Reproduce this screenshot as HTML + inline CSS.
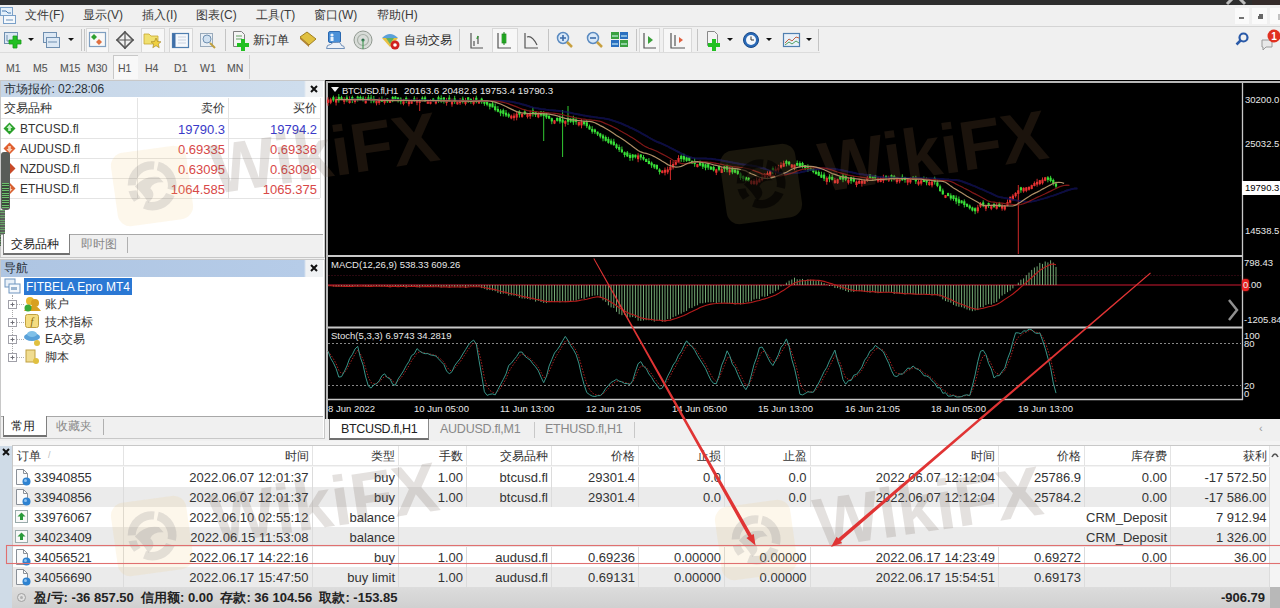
<!DOCTYPE html>
<html><head><meta charset="utf-8">
<style>
*{margin:0;padding:0;box-sizing:border-box}
html,body{width:1280px;height:608px;overflow:hidden;background:#f0f0f0;font-family:"Liberation Sans",sans-serif;color:#222}
#root{position:absolute;left:0;top:0;width:1280px;height:608px;overflow:hidden}
.a{position:absolute}
.t{position:absolute;white-space:nowrap;line-height:1}
.menu .t{font-size:12px;color:#3a3a3a;top:9px}
.tf .t{font-size:10.5px;color:#555;top:63px;-webkit-text-stroke:0.1px #555}
.hdr{background:linear-gradient(90deg,#c6d6e8 0,#cedded 303px,#f0f2f4 305px)}
.hdr2{background:linear-gradient(90deg,#aec5e2 0,#b6cce8 303px,#f0f2f4 305px)}
.mw .t{font-size:12px}
.mw .p{font-size:13px}
.rt{text-align:right}
.sep{position:absolute;width:1px;background:#c8c8c8}
.tb .t{font-size:12px;color:#2a2a2a;top:34px}
.ch .t{color:#e8e8e8;font-size:9.5px}
.term .t{font-size:13px;color:#333}
</style></head><body><div id="root">

<!-- top dark bar -->
<div class="a" style="left:0;top:0;width:1280px;height:5px;background:#2e2e2e"></div>

<!-- menubar -->
<div class="a menu" style="left:0;top:5px;width:1280px;height:21px;background:#f0f0f0">
</div>
<div class="menu">
  <svg class="a" style="left:0;top:6px" width="17" height="18" viewBox="0 0 17 18"><rect x="0.5" y="1.5" width="12" height="8" fill="#e4f0fa" stroke="#7aa0c8"/><path d="M2 5h4l2 2h3" stroke="#4a7ab0" fill="none"/><rect x="3.5" y="9.5" width="12" height="8" fill="#f4f8fc" stroke="#7aa0c8"/><path d="M6 14h7" stroke="#6a90b8"/></svg>
  <div class="t" style="left:25px">文件(F)</div>
  <div class="t" style="left:83px">显示(V)</div>
  <div class="t" style="left:142px">插入(I)</div>
  <div class="t" style="left:196px">图表(C)</div>
  <div class="t" style="left:256px">工具(T)</div>
  <div class="t" style="left:314px">窗口(W)</div>
  <div class="t" style="left:377px">帮助(H)</div>
</div>
<div class="a" style="left:0;top:26px;width:1280px;height:1px;background:#d4d4d4"></div>

<!-- toolbar -->
<div class="tb">
  <div class="t" style="left:253px">新订单</div>
  <div class="t" style="left:404px">自动交易</div>
</div>


<!-- toolbar icons -->
<svg class="a" style="left:0;top:0" width="830" height="56" viewBox="0 0 830 56">
 <g fill="none" stroke="#c4c4c4">
  <path d="M81.5 29v22M84.5 29v22M225.5 29v22M459.5 29v22M548.5 29v22M636.5 29v22M697.5 29v22M818.5 29v22"/>
 </g>
 <g fill="#f7f7f7" stroke="#d8d8d8">
  <rect x="86.5" y="28.5" width="22" height="24"/><rect x="141.5" y="28.5" width="23" height="24"/><rect x="169.5" y="28.5" width="23" height="24"/>
  <rect x="492.5" y="28.5" width="25" height="24"/><rect x="639.5" y="28.5" width="20" height="24"/><rect x="663.5" y="28.5" width="28" height="24"/>
 </g>
 <!-- new chart -->
 <rect x="4.5" y="32.5" width="13" height="11" fill="#dce8f4" stroke="#6f8fb0"/>
 <path d="M7 35v6h8" stroke="#6f8fb0" fill="none"/>
 <path d="M13 36h4v4h4v4h-4v4h-4v-4h-4v-4h4z" fill="#22c022" stroke="#1a9a1a" stroke-width="0.8"/>
 <path d="M28 38h6l-3 3z" fill="#111"/>
 <!-- profiles -->
 <rect x="43.5" y="32.5" width="13" height="10" fill="#dce8f4" stroke="#6f8fb0"/>
 <rect x="46.5" y="37.5" width="13" height="10" fill="#dce8f4" stroke="#6f8fb0"/>
 <path d="M48 42h9" stroke="#6f8fb0"/>
 <path d="M68 38h6l-3 3z" fill="#111"/>
 <!-- market watch -->
 <rect x="89.5" y="32.5" width="16" height="14" fill="#f8f8f8" stroke="#7f9fc0" stroke-width="1.2"/>
 <path d="M94 34l3 3-3 3-3-3z" fill="#30a030"/><path d="M99 39l3 3-3 3-3-3z" fill="#e07040"/>
 <!-- crosshair -->
 <path d="M125 32l8 8-8 8-8-8z" fill="none" stroke="#555" stroke-width="1.6"/>
 <path d="M125 31v18M116 40h18" stroke="#555" stroke-width="1.2"/>
 <!-- navigator folder star -->
 <path d="M144 34h5l2 2h7v8h-14z" fill="#f0e070" stroke="#c8a830" stroke-width="0.8"/>
 <path d="M156 38l1.5 3.5 3.5 0.3-2.7 2.3 0.9 3.6-3.2-2-3.2 2 0.9-3.6-2.7-2.3 3.5-0.3z" fill="#f0d040" stroke="#a08020" stroke-width="0.6"/>
 <!-- terminal -->
 <rect x="172.5" y="33.5" width="16" height="14" fill="#f4f8fc" stroke="#4f7fb0" stroke-width="1.2"/>
 <rect x="172.5" y="33.5" width="3" height="14" fill="#3f6fa8"/>
 <path d="M178 37h8M178 40h8M178 43h8" stroke="#c0c8d8" stroke-width="0.8"/>
 <!-- tester -->
 <rect x="200.5" y="33.5" width="12" height="13" fill="#e8eef4" stroke="#9ab"/>
 <circle cx="207" cy="39" r="4" fill="#cfe0f0" stroke="#7090b0"/>
 <path d="M210 43l5 5" stroke="#c0a040" stroke-width="2"/>
 <!-- new order -->
 <path d="M233.5 31.5h8l3 3v12h-11z" fill="#f4f4f4" stroke="#808080"/>
 <path d="M236 36h6M236 39h6" stroke="#60a060"/>
 <path d="M241 39h4v4h4v4h-4v4h-4v-4h-4v-4h4z" fill="#22c022"/>
 <!-- metaeditor gold -->
 <path d="M300 37l7-5 9 7-7 6z" fill="#e0c040" stroke="#a08020"/>
 <path d="M300 37l9 8 0 2-9-8z" fill="#b08030"/>
 <!-- person cloud -->
 <rect x="328.5" y="31.5" width="12" height="11" rx="1.5" fill="#4a90d8" stroke="#2a68b0"/>
 <circle cx="332" cy="35" r="1.6" fill="#e8f2fc"/><rect x="330.5" y="37" width="3" height="4" fill="#e8f2fc"/>
 <path d="M326.5 48.5 q0-4 4-4 q2-3 6-2 q4-1 5 3 q3 0 3 3 z" fill="#eef2f8" stroke="#6f8fb8"/>
 <!-- signals -->
 <circle cx="363" cy="40" r="9" fill="#d8dcd8" stroke="#909890"/>
 <circle cx="363" cy="40" r="5.5" fill="none" stroke="#a8b0a8" stroke-width="1.2"/>
 <circle cx="363" cy="40" r="1.6" fill="#2a6a4a"/>
 <path d="M363 40v9" stroke="#4a9a5a" stroke-width="1.2"/>
 <!-- auto trading -->
 <path d="M382 38q8-8 16 0z" fill="#5aa0d8"/>
 <path d="M382 38l8 9 8-9z" fill="#e8c040"/>
 <path d="M386 38l4 6 4-6z" fill="#60b060"/>
 <circle cx="395" cy="45" r="4.5" fill="#d02020"/><circle cx="395" cy="45" r="1.8" fill="#fff"/>
 <!-- chart types -->
 <g stroke="#555" stroke-width="1.2" fill="none"><path d="M471 33v15h12M474 46v-5M478 44v-8"/></g>
 <path d="M478 36l-1 3" stroke="#3a9a3a" stroke-width="1.4"/>
 <g stroke="#555" stroke-width="1.2" fill="none"><path d="M498 33v15h13"/></g>
 <rect x="502" y="34" width="4" height="9" fill="#28c028" stroke="#1a801a" stroke-width="0.7"/><path d="M504 32v13" stroke="#1a801a"/>
 <g stroke="#555" stroke-width="1.2" fill="none"><path d="M525 33v15h13"/><path d="M527 37q5-2 10 8"/></g>
 <!-- zoom in/out -->
 <circle cx="563" cy="38" r="5.5" fill="#d8e8f8" stroke="#5a8ac0" stroke-width="1.5"/>
 <path d="M560 38h6M563 35v6" stroke="#3a6aa8" stroke-width="1.6"/>
 <path d="M567 42l5 5" stroke="#c8a040" stroke-width="2.5"/>
 <circle cx="593" cy="38" r="5.5" fill="#d8e8f8" stroke="#5a8ac0" stroke-width="1.5"/>
 <path d="M590 38h6" stroke="#3a6aa8" stroke-width="1.6"/>
 <path d="M597 42l5 5" stroke="#c8a040" stroke-width="2.5"/>
 <!-- tile -->
 <rect x="611" y="32" width="8" height="7" fill="#3aa040"/><rect x="620" y="32" width="8" height="7" fill="#2a70c0"/>
 <rect x="611" y="40" width="8" height="7" fill="#2a70c0"/><rect x="620" y="40" width="8" height="7" fill="#3aa040"/>
 <path d="M612 36h6M621 36h6M612 44h6M621 44h6" stroke="#dff" stroke-width="1.2"/>
 <!-- autoscroll / shift -->
 <g stroke="#555" stroke-width="1.2" fill="none"><path d="M644 33v15h12M671 33v15h14M675 35v11"/></g>
 <path d="M648 36l5 4-5 4z" fill="#3aa03a"/>
 <path d="M679 37l4 3-4 3z" fill="#e06040"/>
 <!-- indicators -->
 <path d="M707.5 31.5h7l3 3v11h-10z" fill="#f4f4f4" stroke="#888"/>
 <path d="M712 39h4v4h4v4h-4v4h-4v-4h-4v-4h4z" fill="#22c022"/>
 <path d="M727 38h6l-3 3z" fill="#111"/>
 <!-- clock -->
 <circle cx="751" cy="40" r="7.5" fill="#2a6ab8" stroke="#1a4a88"/>
 <circle cx="751" cy="40" r="5" fill="#f4f8fc"/>
 <path d="M751 36.5v3.5h3" stroke="#333" fill="none"/>
 <path d="M766 38h6l-3 3z" fill="#111"/>
 <!-- templates -->
 <rect x="783.5" y="33.5" width="16" height="13" fill="#e8f0f8" stroke="#4f7fb0" stroke-width="1.2"/>
 <path d="M785 43l4-4 3 2 4-4 3 1" stroke="#c06040" fill="none"/><path d="M785 45l4-3 3 2 4-3 3 2" stroke="#50a060" fill="none"/>
 <path d="M806 38h6l-3 3z" fill="#111"/>
</svg>
<!-- right-side icons -->
<svg class="a" style="left:1200px;top:0" width="80" height="56" viewBox="0 0 80 56">
 <path d="M27 4l6-6M39 -2l6 6" stroke="#bdbdbd" stroke-width="3"/><rect x="52" y="0" width="28" height="5" fill="#3a2a28" opacity="0.6"/>
 <rect x="35" y="8" width="14" height="16" fill="#fafafa"/><rect x="52" y="8" width="15" height="16" fill="#fafafa"/><rect x="70" y="8" width="10" height="16" fill="#fafafa"/>
 <path d="M39 18h5" stroke="#444" stroke-width="1.5"/>
 <path d="M59 14h4v5h-4zM58 16h3v3h-3z" fill="#666"/>
 <path d="M79 14v6" stroke="#888"/>
 <circle cx="43.5" cy="37.5" r="4" fill="none" stroke="#2a5aa8" stroke-width="2.2"/>
 <path d="M40.5 40.5l-4 4" stroke="#2a5aa8" stroke-width="2.5"/>
 <path d="M62 40h10v7h-6l-3 3v-3h-1z" fill="#e8e8e8" stroke="#9a9a9a"/>
 <circle cx="74" cy="36" r="6.5" fill="#e03020"/>
 <text x="74" y="40" font-size="10" font-weight="bold" fill="#fff" text-anchor="middle" font-family="Liberation Sans">1</text>
</svg>

<!-- timeframe bar -->
<div class="tf">
  <div class="t" style="left:6px">M1</div>
  <div class="t" style="left:33px">M5</div>
  <div class="t" style="left:60px">M15</div>
  <div class="t" style="left:87px">M30</div>
  <div class="a" style="left:113px;top:55px;width:25px;height:24px;background:#f8f8f8;border-left:1px solid #c8c8c8;border-top:1px solid #c8c8c8"></div>
  <div class="t" style="left:118px">H1</div>
  <div class="t" style="left:145px">H4</div>
  <div class="t" style="left:174px">D1</div>
  <div class="t" style="left:200px">W1</div>
  <div class="t" style="left:227px">MN</div>
  <div class="a" style="left:249px;top:55px;width:1px;height:24px;background:#d0d0d0"></div>
  <div class="a" style="left:0;top:52px;width:820px;height:1px;background:#dcdcdc"></div>
</div>

<!-- market watch -->
<div class="a" style="left:0;top:80px;width:325px;height:178px;background:#fff;border:1px solid #c8c8c8"></div>
<div class="a hdr" style="left:1px;top:81px;width:322px;height:16px"></div>
<div class="t" style="left:4px;top:83px;font-size:12px;color:#2a323a;letter-spacing:-0.1px">市场报价: 02:28:06</div>
<svg class="a" style="left:309px;top:84px" width="10" height="10" viewBox="0 0 10 10"><path d="M2 2L8 8M8 2L2 8" stroke="#111" stroke-width="2"/></svg>


<!-- market watch content -->
<div class="mw">
<div class="t" style="left:4px;top:102px;color:#333">交易品种</div>
<div class="t rt" style="left:150px;width:75px;top:102px;color:#333">卖价</div>
<div class="t rt" style="left:240px;width:77px;top:102px;color:#333">买价</div>
<div class="a" style="left:1px;top:118px;width:319px;height:1px;background:#e4e4e4"></div>
<div class="a" style="left:1px;top:138px;width:319px;height:1px;background:#e4e4e4"></div>
<div class="a" style="left:1px;top:158px;width:319px;height:1px;background:#e4e4e4"></div>
<div class="a" style="left:1px;top:178px;width:319px;height:1px;background:#e4e4e4"></div>
<div class="a" style="left:1px;top:198px;width:319px;height:1px;background:#e4e4e4"></div>
<div class="a" style="left:137px;top:98px;width:1px;height:100px;background:#e4e4e4"></div>
<div class="a" style="left:228px;top:98px;width:1px;height:100px;background:#e4e4e4"></div>
<div class="a" style="left:320px;top:98px;width:1px;height:100px;background:#e4e4e4"></div>
<div class="t" style="left:20px;top:123px;color:#333">BTCUSD.fl</div>
<div class="t" style="left:20px;top:143px;color:#333">AUDUSD.fl</div>
<div class="t" style="left:20px;top:163px;color:#333">NZDUSD.fl</div>
<div class="t" style="left:20px;top:183px;color:#333">ETHUSD.fl</div>
<div class="t rt p" style="left:125px;width:100px;top:123px;color:#3a3ac8">19790.3</div>
<div class="t rt p" style="left:217px;width:100px;top:123px;color:#3a3ac8">19794.2</div>
<div class="t rt p" style="left:125px;width:100px;top:143px;color:#d84848">0.69335</div>
<div class="t rt p" style="left:217px;width:100px;top:143px;color:#d84848">0.69336</div>
<div class="t rt p" style="left:125px;width:100px;top:163px;color:#d84848">0.63095</div>
<div class="t rt p" style="left:217px;width:100px;top:163px;color:#d84848">0.63098</div>
<div class="t rt p" style="left:125px;width:100px;top:183px;color:#d84848">1064.585</div>
<div class="t rt p" style="left:217px;width:100px;top:183px;color:#d84848">1065.375</div>
<svg class="a" style="left:3px;top:122px" width="14" height="76" viewBox="0 0 14 76">
 <path d="M6.5 0.5 L12.5 6.5 L6.5 12.5 L0.5 6.5 Z" fill="#2aa02a"/><path d="M6.5 2.5 L9.5 6 H7.8 V9 H5.2 V6 H3.5 Z" fill="#c8f0c8"/>
 <path d="M6.5 20.5 L12.5 26.5 L6.5 32.5 L0.5 26.5 Z" fill="#e06030"/><path d="M6.5 30.5 L9.5 27 H7.8 V24 H5.2 V27 H3.5 Z" fill="#f8d0b8"/>
 <path d="M6.5 40.5 L12.5 46.5 L6.5 52.5 L0.5 46.5 Z" fill="#c84a28"/>
 <path d="M6.5 60.5 L12.5 66.5 L6.5 72.5 L0.5 66.5 Z" fill="#d86030"/><path d="M6.5 70.5 L9.5 67 H7.8 V64 H5.2 V67 H3.5 Z" fill="#f8d0b8"/>
</svg>
<div class="a" style="left:1px;top:152px;width:9px;height:58px;background:#585c58;border-radius:3px"></div>
<div class="a" style="left:2px;top:183px;width:7px;height:25px;background:repeating-linear-gradient(#6cc06c 0 1px,#3a4a3a 1px 2.4px)"></div>
<div class="a" style="left:0;top:210px;width:5px;height:36px;background:repeating-linear-gradient(#5a9a5a 0 1px,#4a504a 1px 2.4px);opacity:.9"></div>
</div>
<!-- market watch tabs -->
<div class="a" style="left:1px;top:234px;width:322px;height:23px;background:#f0f0f0;border-top:1px solid #a8a8a8"></div>
<div class="a" style="left:3px;top:234px;width:67px;height:21px;background:#fff;border:1px solid #808080;border-top:none;border-bottom:2px solid #707070"></div>
<div class="t" style="left:11px;top:238px;font-size:12px;color:#222">交易品种</div>
<div class="t" style="left:81px;top:238px;font-size:12px;color:#888">即时图</div>
<div class="sep" style="left:127px;top:237px;height:16px;background:#b0b0b0"></div>

<!-- navigator -->
<div class="a" style="left:0;top:259px;width:325px;height:180px;background:#fff;border:1px solid #c8c8c8"></div>
<div class="a hdr2" style="left:1px;top:260px;width:322px;height:17px"></div>
<div class="t" style="left:4px;top:262px;font-size:12px;color:#2a3038">导航</div>
<svg class="a" style="left:309px;top:263px" width="10" height="10" viewBox="0 0 10 10"><path d="M2 2L8 8M8 2L2 8" stroke="#111" stroke-width="2"/></svg>


<!-- navigator content -->
<svg class="a" style="left:4px;top:278px" width="17" height="17" viewBox="0 0 17 17">
 <rect x="1" y="1" width="10" height="8" fill="#e8f0f8" stroke="#6f95c0"/>
 <rect x="5" y="6" width="11" height="9" fill="#f4f8fc" stroke="#6f95c0"/>
 <rect x="7" y="9" width="6" height="3" fill="#9ab4d0"/>
</svg>
<div class="a" style="left:24px;top:278px;width:108px;height:17px;background:#2a78d4"></div>
<div class="t" style="left:26px;top:281px;font-size:12px;color:#fff">FITBELA Epro MT4</div>
<div class="a" style="left:12px;top:295px;width:0;height:62px;border-left:1px dotted #a8a8a8"></div>
<svg class="a" style="left:6px;top:296px" width="40" height="70" viewBox="0 0 40 70">
 <g fill="#fff" stroke="#a0a0a8" stroke-width="1">
  <rect x="2.5" y="4.5" width="8" height="8"/><rect x="2.5" y="22.5" width="8" height="8"/><rect x="2.5" y="39.5" width="8" height="8"/><rect x="2.5" y="57.5" width="8" height="8"/>
 </g>
 <g stroke="#707078" stroke-width="1">
  <path d="M4.5 8.5h4M6.5 6.5v4M4.5 26.5h4M6.5 24.5v4M4.5 43.5h4M6.5 41.5v4M4.5 61.5h4M6.5 59.5v4"/>
 </g>
 <g stroke="#b0b0b0" stroke-width="1" stroke-dasharray="1,1"><path d="M11 8.5h7M11 26.5h7M11 43.5h7M11 61.5h7"/></g>
 <!-- people icon -->
 <circle cx="24" cy="5" r="4" fill="#e8b830"/><circle cx="29" cy="7" r="4" fill="#d8a020"/>
 <path d="M18 15 q3 -6 8 -5 q5 -1 9 5 z" fill="#d8a020"/>
 <circle cx="22" cy="12" r="3.5" fill="#38a838"/>
 <!-- f icon -->
 <rect x="19.5" y="18.5" width="13" height="13" rx="2" fill="#f4dc80" stroke="#c0a040"/>
 <text x="26" y="29" font-size="10" font-style="italic" fill="#806000" text-anchor="middle" font-family="Liberation Serif">f</text>
 <!-- EA hat -->
 <ellipse cx="26" cy="41" rx="8" ry="4" fill="#58a0d8"/><ellipse cx="26" cy="38" rx="5" ry="3" fill="#80c0e8"/>
 <circle cx="31" cy="47" r="3" fill="#e0c040"/>
 <!-- script -->
 <rect x="20" y="54" width="9" height="12" fill="#f0dc90" stroke="#c0a040"/>
 <circle cx="30" cy="65" r="3" fill="#e0c040"/>
</svg>
<div class="t" style="left:45px;top:298px;font-size:12px;color:#333">账户</div>
<div class="t" style="left:45px;top:316px;font-size:12px;color:#333">技术指标</div>
<div class="t" style="left:45px;top:333px;font-size:12px;color:#333">EA交易</div>
<div class="t" style="left:45px;top:351px;font-size:12px;color:#333">脚本</div>
<!-- navigator tabs -->
<div class="a" style="left:1px;top:416px;width:322px;height:22px;background:#f0f0f0;border-top:1px solid #a8a8a8"></div>
<div class="a" style="left:3px;top:416px;width:44px;height:21px;background:#fff;border:1px solid #808080;border-top:none;border-bottom:2px solid #707070"></div>
<div class="t" style="left:11px;top:420px;font-size:12px;color:#222">常用</div>
<div class="t" style="left:56px;top:420px;font-size:12px;color:#888">收藏夹</div>
<div class="sep" style="left:103px;top:419px;height:16px;background:#b0b0b0"></div>

<!-- chart window -->
<div class="a" style="left:325px;top:80px;width:955px;height:339px;background:#000;border-left:1px solid #222;"></div>
<div class="a" style="left:326px;top:81px;width:954px;height:2px;background:#b8b8b8"></div>
<div class="a" style="left:326px;top:81px;width:2px;height:338px;background:#b8b8b8"></div>
<svg class="a" style="left:0;top:0" width="1280" height="608" viewBox="0 0 1280 608">
  <defs><filter id="soft" x="0" y="0" width="1" height="1"><feGaussianBlur stdDeviation="0.45"/></filter></defs>
  <g filter="url(#soft)"><line x1="328.0" y1="97.3" x2="328.0" y2="105.7" stroke="#e83030" stroke-width="0.9"/><rect x="326.9" y="99.6" width="2.2" height="3.3" fill="#e83030"/>
<line x1="330.7" y1="97.7" x2="330.7" y2="104.2" stroke="#e83030" stroke-width="0.9"/><rect x="329.6" y="99.3" width="2.2" height="3.4" fill="#e83030"/>
<line x1="333.4" y1="95.6" x2="333.4" y2="101.8" stroke="#38e038" stroke-width="0.9"/><rect x="332.3" y="97.2" width="2.2" height="3.2" fill="#38e038"/>
<line x1="336.1" y1="96.5" x2="336.1" y2="105.5" stroke="#e83030" stroke-width="0.9"/><rect x="335.0" y="99.1" width="2.2" height="3.5" fill="#e83030"/>
<line x1="338.8" y1="94.0" x2="338.8" y2="102.7" stroke="#38e038" stroke-width="0.9"/><rect x="337.7" y="96.9" width="2.2" height="3.3" fill="#38e038"/>
<line x1="341.5" y1="95.8" x2="341.5" y2="100.1" stroke="#38e038" stroke-width="0.9"/><rect x="340.4" y="97.2" width="2.2" height="2.7" fill="#38e038"/>
<line x1="344.2" y1="97.2" x2="344.2" y2="104.2" stroke="#e83030" stroke-width="0.9"/><rect x="343.1" y="99.2" width="2.2" height="2.6" fill="#e83030"/>
<line x1="346.9" y1="95.3" x2="346.9" y2="102.2" stroke="#38e038" stroke-width="0.9"/><rect x="345.8" y="97.5" width="2.2" height="2.7" fill="#38e038"/>
<line x1="349.6" y1="96.3" x2="349.6" y2="103.7" stroke="#e83030" stroke-width="0.9"/><rect x="348.5" y="99.2" width="2.2" height="3.8" fill="#e83030"/>
<line x1="352.3" y1="95.6" x2="352.3" y2="103.1" stroke="#38e038" stroke-width="0.9"/><rect x="351.2" y="97.0" width="2.2" height="3.1" fill="#38e038"/>
<line x1="355.0" y1="98.1" x2="355.0" y2="103.6" stroke="#e83030" stroke-width="0.9"/><rect x="353.9" y="99.3" width="2.2" height="2.7" fill="#e83030"/>
<line x1="357.7" y1="95.7" x2="357.7" y2="101.6" stroke="#38e038" stroke-width="0.9"/><rect x="356.6" y="96.6" width="2.2" height="2.8" fill="#38e038"/>
<line x1="360.4" y1="95.5" x2="360.4" y2="100.2" stroke="#38e038" stroke-width="0.9"/><rect x="359.3" y="96.9" width="2.2" height="3.3" fill="#38e038"/>
<line x1="363.1" y1="96.1" x2="363.1" y2="101.3" stroke="#38e038" stroke-width="0.9"/><rect x="362.0" y="97.7" width="2.2" height="3.4" fill="#38e038"/>
<line x1="365.7" y1="96.7" x2="365.7" y2="103.6" stroke="#e83030" stroke-width="0.9"/><rect x="364.6" y="99.6" width="2.2" height="3.7" fill="#e83030"/>
<line x1="368.4" y1="94.9" x2="368.4" y2="100.6" stroke="#38e038" stroke-width="0.9"/><rect x="367.3" y="97.3" width="2.2" height="2.6" fill="#38e038"/>
<line x1="371.1" y1="94.9" x2="371.1" y2="103.2" stroke="#38e038" stroke-width="0.9"/><rect x="370.0" y="97.6" width="2.2" height="3.1" fill="#38e038"/>
<line x1="373.8" y1="96.0" x2="373.8" y2="103.2" stroke="#38e038" stroke-width="0.9"/><rect x="372.7" y="98.8" width="2.2" height="2.7" fill="#38e038"/>
<line x1="376.5" y1="100.5" x2="376.5" y2="105.4" stroke="#e83030" stroke-width="0.9"/><rect x="375.4" y="100.7" width="2.2" height="2.6" fill="#e83030"/>
<line x1="379.2" y1="97.5" x2="379.2" y2="104.8" stroke="#e83030" stroke-width="0.9"/><rect x="378.1" y="100.3" width="2.2" height="2.6" fill="#e83030"/>
<line x1="381.9" y1="96.4" x2="381.9" y2="101.8" stroke="#38e038" stroke-width="0.9"/><rect x="380.8" y="99.0" width="2.2" height="2.6" fill="#38e038"/>
<line x1="384.6" y1="98.6" x2="384.6" y2="104.5" stroke="#e83030" stroke-width="0.9"/><rect x="383.5" y="99.6" width="2.2" height="3.2" fill="#e83030"/>
<line x1="387.3" y1="98.1" x2="387.3" y2="103.0" stroke="#38e038" stroke-width="0.9"/><rect x="386.2" y="98.5" width="2.2" height="2.9" fill="#38e038"/>
<line x1="390.0" y1="99.7" x2="390.0" y2="103.0" stroke="#e83030" stroke-width="0.9"/><rect x="388.9" y="100.2" width="2.2" height="2.7" fill="#e83030"/>
<line x1="392.7" y1="96.0" x2="392.7" y2="102.2" stroke="#38e038" stroke-width="0.9"/><rect x="391.6" y="97.0" width="2.2" height="3.0" fill="#38e038"/>
<line x1="395.4" y1="96.1" x2="395.4" y2="100.9" stroke="#38e038" stroke-width="0.9"/><rect x="394.3" y="96.6" width="2.2" height="3.3" fill="#38e038"/>
<line x1="398.1" y1="97.4" x2="398.1" y2="102.5" stroke="#38e038" stroke-width="0.9"/><rect x="397.0" y="97.5" width="2.2" height="2.9" fill="#38e038"/>
<line x1="400.8" y1="97.3" x2="400.8" y2="104.3" stroke="#38e038" stroke-width="0.9"/><rect x="399.7" y="98.7" width="2.2" height="2.8" fill="#38e038"/>
<line x1="403.5" y1="98.8" x2="403.5" y2="105.3" stroke="#e83030" stroke-width="0.9"/><rect x="402.4" y="100.1" width="2.2" height="3.7" fill="#e83030"/>
<line x1="406.2" y1="96.4" x2="406.2" y2="103.1" stroke="#38e038" stroke-width="0.9"/><rect x="405.1" y="97.9" width="2.2" height="3.1" fill="#38e038"/>
<line x1="408.9" y1="98.7" x2="408.9" y2="106.3" stroke="#e83030" stroke-width="0.9"/><rect x="407.8" y="101.2" width="2.2" height="3.0" fill="#e83030"/>
<line x1="411.6" y1="99.6" x2="411.6" y2="103.9" stroke="#e83030" stroke-width="0.9"/><rect x="410.5" y="100.6" width="2.2" height="3.1" fill="#e83030"/>
<line x1="414.3" y1="96.2" x2="414.3" y2="101.8" stroke="#38e038" stroke-width="0.9"/><rect x="413.2" y="98.4" width="2.2" height="2.6" fill="#38e038"/>
<line x1="417.0" y1="97.5" x2="417.0" y2="105.2" stroke="#e83030" stroke-width="0.9"/><rect x="415.9" y="100.0" width="2.2" height="2.6" fill="#e83030"/>
<line x1="419.7" y1="99.0" x2="419.7" y2="111.0" stroke="#e83030" stroke-width="0.9"/><rect x="418.6" y="100.0" width="2.2" height="2.9" fill="#e83030"/>
<line x1="422.4" y1="96.3" x2="422.4" y2="101.1" stroke="#38e038" stroke-width="0.9"/><rect x="421.3" y="97.6" width="2.2" height="2.7" fill="#38e038"/>
<line x1="425.1" y1="95.8" x2="425.1" y2="102.1" stroke="#38e038" stroke-width="0.9"/><rect x="424.0" y="97.4" width="2.2" height="4.0" fill="#38e038"/>
<line x1="427.8" y1="99.8" x2="427.8" y2="103.8" stroke="#e83030" stroke-width="0.9"/><rect x="426.7" y="100.8" width="2.2" height="3.0" fill="#e83030"/>
<line x1="430.5" y1="99.1" x2="430.5" y2="104.4" stroke="#e83030" stroke-width="0.9"/><rect x="429.4" y="100.6" width="2.2" height="3.2" fill="#e83030"/>
<line x1="433.2" y1="97.9" x2="433.2" y2="101.5" stroke="#38e038" stroke-width="0.9"/><rect x="432.1" y="98.7" width="2.2" height="2.5" fill="#38e038"/>
<line x1="435.9" y1="100.8" x2="435.9" y2="104.4" stroke="#e83030" stroke-width="0.9"/><rect x="434.8" y="100.9" width="2.2" height="2.6" fill="#e83030"/>
<line x1="438.5" y1="95.6" x2="438.5" y2="102.8" stroke="#38e038" stroke-width="0.9"/><rect x="437.4" y="97.2" width="2.2" height="3.4" fill="#38e038"/>
<line x1="441.2" y1="95.4" x2="441.2" y2="102.8" stroke="#38e038" stroke-width="0.9"/><rect x="440.1" y="98.1" width="2.2" height="3.6" fill="#38e038"/>
<line x1="443.9" y1="97.0" x2="443.9" y2="103.6" stroke="#38e038" stroke-width="0.9"/><rect x="442.8" y="97.5" width="2.2" height="4.0" fill="#38e038"/>
<line x1="446.6" y1="97.9" x2="446.6" y2="105.7" stroke="#e83030" stroke-width="0.9"/><rect x="445.5" y="100.4" width="2.2" height="2.6" fill="#e83030"/>
<line x1="449.3" y1="95.1" x2="449.3" y2="101.6" stroke="#38e038" stroke-width="0.9"/><rect x="448.2" y="97.6" width="2.2" height="3.6" fill="#38e038"/>
<line x1="452.0" y1="98.6" x2="452.0" y2="106.7" stroke="#e83030" stroke-width="0.9"/><rect x="450.9" y="101.1" width="2.2" height="3.3" fill="#e83030"/>
<line x1="454.7" y1="95.8" x2="454.7" y2="103.9" stroke="#38e038" stroke-width="0.9"/><rect x="453.6" y="98.4" width="2.2" height="3.4" fill="#38e038"/>
<line x1="457.4" y1="101.4" x2="457.4" y2="104.7" stroke="#e83030" stroke-width="0.9"/><rect x="456.3" y="101.5" width="2.2" height="2.8" fill="#e83030"/>
<line x1="460.1" y1="98.0" x2="460.1" y2="104.9" stroke="#e83030" stroke-width="0.9"/><rect x="459.0" y="100.5" width="2.2" height="2.7" fill="#e83030"/>
<line x1="462.8" y1="96.6" x2="462.8" y2="103.5" stroke="#38e038" stroke-width="0.9"/><rect x="461.7" y="98.6" width="2.2" height="3.4" fill="#38e038"/>
<line x1="465.5" y1="97.9" x2="465.5" y2="105.4" stroke="#e83030" stroke-width="0.9"/><rect x="464.4" y="100.2" width="2.2" height="3.7" fill="#e83030"/>
<line x1="468.2" y1="97.1" x2="468.2" y2="103.0" stroke="#38e038" stroke-width="0.9"/><rect x="467.1" y="97.3" width="2.2" height="3.5" fill="#38e038"/>
<line x1="470.9" y1="98.2" x2="470.9" y2="103.8" stroke="#38e038" stroke-width="0.9"/><rect x="469.8" y="99.0" width="2.2" height="2.6" fill="#38e038"/>
<line x1="473.6" y1="97.3" x2="473.6" y2="105.3" stroke="#e83030" stroke-width="0.9"/><rect x="472.5" y="100.2" width="2.2" height="3.6" fill="#e83030"/>
<line x1="476.3" y1="95.7" x2="476.3" y2="103.3" stroke="#38e038" stroke-width="0.9"/><rect x="475.2" y="97.8" width="2.2" height="3.2" fill="#38e038"/>
<line x1="479.0" y1="99.8" x2="479.0" y2="103.9" stroke="#e83030" stroke-width="0.9"/><rect x="477.9" y="100.0" width="2.2" height="3.5" fill="#e83030"/>
<line x1="481.7" y1="97.7" x2="481.7" y2="103.9" stroke="#38e038" stroke-width="0.9"/><rect x="480.6" y="98.6" width="2.2" height="3.6" fill="#38e038"/>
<line x1="484.4" y1="100.4" x2="484.4" y2="105.8" stroke="#38e038" stroke-width="0.9"/><rect x="483.3" y="101.2" width="2.2" height="2.6" fill="#38e038"/>
<line x1="487.1" y1="100.3" x2="487.1" y2="106.3" stroke="#38e038" stroke-width="0.9"/><rect x="486.0" y="101.2" width="2.2" height="3.5" fill="#38e038"/>
<line x1="489.8" y1="103.2" x2="489.8" y2="109.4" stroke="#38e038" stroke-width="0.9"/><rect x="488.7" y="103.5" width="2.2" height="3.2" fill="#38e038"/>
<line x1="492.5" y1="100.5" x2="492.5" y2="107.4" stroke="#38e038" stroke-width="0.9"/><rect x="491.4" y="103.4" width="2.2" height="4.0" fill="#38e038"/>
<line x1="495.2" y1="103.4" x2="495.2" y2="111.4" stroke="#38e038" stroke-width="0.9"/><rect x="494.1" y="106.3" width="2.2" height="3.7" fill="#38e038"/>
<line x1="497.9" y1="106.1" x2="497.9" y2="112.3" stroke="#38e038" stroke-width="0.9"/><rect x="496.8" y="108.9" width="2.2" height="2.8" fill="#38e038"/>
<line x1="500.6" y1="109.1" x2="500.6" y2="116.2" stroke="#38e038" stroke-width="0.9"/><rect x="499.5" y="110.6" width="2.2" height="2.7" fill="#38e038"/>
<line x1="503.3" y1="108.6" x2="503.3" y2="116.5" stroke="#38e038" stroke-width="0.9"/><rect x="502.2" y="110.2" width="2.2" height="3.7" fill="#38e038"/>
<line x1="506.0" y1="110.0" x2="506.0" y2="117.0" stroke="#38e038" stroke-width="0.9"/><rect x="504.9" y="112.7" width="2.2" height="2.8" fill="#38e038"/>
<line x1="508.7" y1="112.6" x2="508.7" y2="117.9" stroke="#38e038" stroke-width="0.9"/><rect x="507.6" y="114.1" width="2.2" height="2.5" fill="#38e038"/>
<line x1="511.3" y1="114.6" x2="511.3" y2="119.3" stroke="#e83030" stroke-width="0.9"/><rect x="510.2" y="115.7" width="2.2" height="2.7" fill="#e83030"/>
<line x1="514.0" y1="113.3" x2="514.0" y2="120.6" stroke="#e83030" stroke-width="0.9"/><rect x="512.9" y="115.6" width="2.2" height="2.5" fill="#e83030"/>
<line x1="516.7" y1="111.5" x2="516.7" y2="120.3" stroke="#e83030" stroke-width="0.9"/><rect x="515.6" y="113.7" width="2.2" height="3.9" fill="#e83030"/>
<line x1="519.4" y1="110.3" x2="519.4" y2="117.6" stroke="#38e038" stroke-width="0.9"/><rect x="518.3" y="111.5" width="2.2" height="3.1" fill="#38e038"/>
<line x1="522.1" y1="112.6" x2="522.1" y2="117.8" stroke="#e83030" stroke-width="0.9"/><rect x="521.0" y="113.9" width="2.2" height="3.0" fill="#e83030"/>
<line x1="524.8" y1="109.0" x2="524.8" y2="115.0" stroke="#38e038" stroke-width="0.9"/><rect x="523.7" y="111.5" width="2.2" height="2.7" fill="#38e038"/>
<line x1="527.5" y1="113.2" x2="527.5" y2="118.5" stroke="#e83030" stroke-width="0.9"/><rect x="526.4" y="114.0" width="2.2" height="2.9" fill="#e83030"/>
<line x1="530.2" y1="110.4" x2="530.2" y2="118.9" stroke="#e83030" stroke-width="0.9"/><rect x="529.1" y="113.2" width="2.2" height="3.1" fill="#e83030"/>
<line x1="532.9" y1="107.6" x2="532.9" y2="116.6" stroke="#38e038" stroke-width="0.9"/><rect x="531.8" y="110.4" width="2.2" height="3.4" fill="#38e038"/>
<line x1="535.6" y1="111.1" x2="535.6" y2="117.0" stroke="#38e038" stroke-width="0.9"/><rect x="534.5" y="111.2" width="2.2" height="3.6" fill="#38e038"/>
<line x1="538.3" y1="111.8" x2="538.3" y2="118.2" stroke="#e83030" stroke-width="0.9"/><rect x="537.2" y="113.7" width="2.2" height="3.6" fill="#e83030"/>
<line x1="541.0" y1="111.1" x2="541.0" y2="116.8" stroke="#38e038" stroke-width="0.9"/><rect x="539.9" y="111.5" width="2.2" height="3.9" fill="#38e038"/>
<line x1="543.7" y1="111.0" x2="543.7" y2="141.0" stroke="#38e038" stroke-width="0.9"/><rect x="542.6" y="113.2" width="2.2" height="2.9" fill="#38e038"/>
<line x1="546.4" y1="113.0" x2="546.4" y2="119.0" stroke="#38e038" stroke-width="0.9"/><rect x="545.3" y="113.9" width="2.2" height="3.5" fill="#38e038"/>
<line x1="549.1" y1="115.3" x2="549.1" y2="119.2" stroke="#38e038" stroke-width="0.9"/><rect x="548.0" y="115.8" width="2.2" height="2.8" fill="#38e038"/>
<line x1="551.8" y1="117.6" x2="551.8" y2="124.2" stroke="#38e038" stroke-width="0.9"/><rect x="550.7" y="118.2" width="2.2" height="3.2" fill="#38e038"/>
<line x1="554.5" y1="120.0" x2="554.5" y2="124.1" stroke="#e83030" stroke-width="0.9"/><rect x="553.4" y="120.4" width="2.2" height="3.2" fill="#e83030"/>
<line x1="557.2" y1="117.6" x2="557.2" y2="121.6" stroke="#38e038" stroke-width="0.9"/><rect x="556.1" y="117.8" width="2.2" height="3.0" fill="#38e038"/>
<line x1="559.9" y1="115.4" x2="559.9" y2="123.6" stroke="#38e038" stroke-width="0.9"/><rect x="558.8" y="118.0" width="2.2" height="3.4" fill="#38e038"/>
<line x1="562.6" y1="110.0" x2="562.6" y2="157.0" stroke="#38e038" stroke-width="0.9"/><rect x="561.5" y="119.5" width="2.2" height="3.1" fill="#38e038"/>
<line x1="565.3" y1="120.2" x2="565.3" y2="126.6" stroke="#e83030" stroke-width="0.9"/><rect x="564.2" y="121.1" width="2.2" height="2.6" fill="#e83030"/>
<line x1="568.0" y1="106.0" x2="568.0" y2="125.0" stroke="#38e038" stroke-width="0.9"/><rect x="566.9" y="118.4" width="2.2" height="3.3" fill="#38e038"/>
<line x1="570.7" y1="118.1" x2="570.7" y2="122.9" stroke="#38e038" stroke-width="0.9"/><rect x="569.6" y="118.8" width="2.2" height="2.9" fill="#38e038"/>
<line x1="573.4" y1="115.8" x2="573.4" y2="124.9" stroke="#38e038" stroke-width="0.9"/><rect x="572.3" y="118.4" width="2.2" height="3.9" fill="#38e038"/>
<line x1="576.1" y1="117.3" x2="576.1" y2="124.7" stroke="#38e038" stroke-width="0.9"/><rect x="575.0" y="119.4" width="2.2" height="2.5" fill="#38e038"/>
<line x1="578.8" y1="121.9" x2="578.8" y2="126.4" stroke="#e83030" stroke-width="0.9"/><rect x="577.7" y="121.9" width="2.2" height="3.4" fill="#e83030"/>
<line x1="581.5" y1="119.1" x2="581.5" y2="128.3" stroke="#e83030" stroke-width="0.9"/><rect x="580.4" y="121.7" width="2.2" height="3.7" fill="#e83030"/>
<line x1="584.1" y1="121.0" x2="584.1" y2="125.7" stroke="#38e038" stroke-width="0.9"/><rect x="583.0" y="121.5" width="2.2" height="2.7" fill="#38e038"/>
<line x1="586.8" y1="120.1" x2="586.8" y2="128.1" stroke="#38e038" stroke-width="0.9"/><rect x="585.7" y="122.3" width="2.2" height="3.9" fill="#38e038"/>
<line x1="589.5" y1="124.6" x2="589.5" y2="129.6" stroke="#38e038" stroke-width="0.9"/><rect x="588.4" y="126.3" width="2.2" height="3.2" fill="#38e038"/>
<line x1="592.2" y1="126.2" x2="592.2" y2="133.7" stroke="#38e038" stroke-width="0.9"/><rect x="591.1" y="128.9" width="2.2" height="2.8" fill="#38e038"/>
<line x1="594.9" y1="128.7" x2="594.9" y2="134.1" stroke="#38e038" stroke-width="0.9"/><rect x="593.8" y="129.5" width="2.2" height="2.7" fill="#38e038"/>
<line x1="597.6" y1="131.5" x2="597.6" y2="136.0" stroke="#38e038" stroke-width="0.9"/><rect x="596.5" y="131.7" width="2.2" height="2.7" fill="#38e038"/>
<line x1="600.3" y1="132.9" x2="600.3" y2="138.4" stroke="#38e038" stroke-width="0.9"/><rect x="599.2" y="133.5" width="2.2" height="3.1" fill="#38e038"/>
<line x1="603.0" y1="134.1" x2="603.0" y2="141.3" stroke="#38e038" stroke-width="0.9"/><rect x="601.9" y="135.5" width="2.2" height="3.0" fill="#38e038"/>
<line x1="605.7" y1="135.5" x2="605.7" y2="141.5" stroke="#38e038" stroke-width="0.9"/><rect x="604.6" y="137.0" width="2.2" height="3.8" fill="#38e038"/>
<line x1="608.4" y1="136.8" x2="608.4" y2="143.7" stroke="#38e038" stroke-width="0.9"/><rect x="607.3" y="138.9" width="2.2" height="3.9" fill="#38e038"/>
<line x1="611.1" y1="138.6" x2="611.1" y2="145.1" stroke="#38e038" stroke-width="0.9"/><rect x="610.0" y="140.6" width="2.2" height="3.2" fill="#38e038"/>
<line x1="613.8" y1="138.8" x2="613.8" y2="145.8" stroke="#38e038" stroke-width="0.9"/><rect x="612.7" y="141.6" width="2.2" height="3.5" fill="#38e038"/>
<line x1="616.5" y1="143.4" x2="616.5" y2="149.2" stroke="#38e038" stroke-width="0.9"/><rect x="615.4" y="144.4" width="2.2" height="3.6" fill="#38e038"/>
<line x1="619.2" y1="144.6" x2="619.2" y2="152.0" stroke="#38e038" stroke-width="0.9"/><rect x="618.1" y="147.0" width="2.2" height="2.8" fill="#38e038"/>
<line x1="621.9" y1="146.5" x2="621.9" y2="153.1" stroke="#38e038" stroke-width="0.9"/><rect x="620.8" y="149.4" width="2.2" height="2.8" fill="#38e038"/>
<line x1="624.6" y1="151.5" x2="624.6" y2="157.3" stroke="#38e038" stroke-width="0.9"/><rect x="623.5" y="152.2" width="2.2" height="2.8" fill="#38e038"/>
<line x1="627.3" y1="151.0" x2="627.3" y2="157.0" stroke="#38e038" stroke-width="0.9"/><rect x="626.2" y="152.5" width="2.2" height="3.9" fill="#38e038"/>
<line x1="630.0" y1="152.9" x2="630.0" y2="160.9" stroke="#38e038" stroke-width="0.9"/><rect x="628.9" y="154.9" width="2.2" height="3.1" fill="#38e038"/>
<line x1="632.7" y1="154.0" x2="632.7" y2="160.6" stroke="#38e038" stroke-width="0.9"/><rect x="631.6" y="154.6" width="2.2" height="3.1" fill="#38e038"/>
<line x1="635.4" y1="154.6" x2="635.4" y2="158.5" stroke="#38e038" stroke-width="0.9"/><rect x="634.3" y="154.7" width="2.2" height="2.6" fill="#38e038"/>
<line x1="638.1" y1="153.2" x2="638.1" y2="162.2" stroke="#e83030" stroke-width="0.9"/><rect x="637.0" y="155.4" width="2.2" height="3.8" fill="#e83030"/>
<line x1="640.8" y1="154.0" x2="640.8" y2="160.3" stroke="#38e038" stroke-width="0.9"/><rect x="639.7" y="154.5" width="2.2" height="3.0" fill="#38e038"/>
<line x1="643.5" y1="155.0" x2="643.5" y2="160.6" stroke="#38e038" stroke-width="0.9"/><rect x="642.4" y="157.0" width="2.2" height="2.5" fill="#38e038"/>
<line x1="646.2" y1="158.5" x2="646.2" y2="162.0" stroke="#38e038" stroke-width="0.9"/><rect x="645.1" y="159.0" width="2.2" height="3.0" fill="#38e038"/>
<line x1="648.9" y1="158.1" x2="648.9" y2="164.4" stroke="#38e038" stroke-width="0.9"/><rect x="647.8" y="161.0" width="2.2" height="3.0" fill="#38e038"/>
<line x1="651.6" y1="161.5" x2="651.6" y2="167.9" stroke="#38e038" stroke-width="0.9"/><rect x="650.5" y="162.6" width="2.2" height="2.8" fill="#38e038"/>
<line x1="654.3" y1="164.2" x2="654.3" y2="168.9" stroke="#38e038" stroke-width="0.9"/><rect x="653.2" y="164.3" width="2.2" height="3.1" fill="#38e038"/>
<line x1="656.9" y1="164.4" x2="656.9" y2="169.9" stroke="#38e038" stroke-width="0.9"/><rect x="655.8" y="165.0" width="2.2" height="3.9" fill="#38e038"/>
<line x1="659.6" y1="168.3" x2="659.6" y2="174.5" stroke="#38e038" stroke-width="0.9"/><rect x="658.5" y="169.5" width="2.2" height="2.5" fill="#38e038"/>
<line x1="662.3" y1="170.3" x2="662.3" y2="173.2" stroke="#e83030" stroke-width="0.9"/><rect x="661.2" y="170.5" width="2.2" height="2.6" fill="#e83030"/>
<line x1="665.0" y1="167.5" x2="665.0" y2="175.4" stroke="#e83030" stroke-width="0.9"/><rect x="663.9" y="169.8" width="2.2" height="2.9" fill="#e83030"/>
<line x1="667.7" y1="166.6" x2="667.7" y2="174.2" stroke="#e83030" stroke-width="0.9"/><rect x="666.6" y="169.4" width="2.2" height="2.9" fill="#e83030"/>
<line x1="670.4" y1="160.0" x2="670.4" y2="180.0" stroke="#e83030" stroke-width="0.9"/><rect x="669.3" y="166.6" width="2.2" height="3.6" fill="#e83030"/>
<line x1="673.1" y1="161.3" x2="673.1" y2="169.5" stroke="#e83030" stroke-width="0.9"/><rect x="672.0" y="164.0" width="2.2" height="3.6" fill="#e83030"/>
<line x1="675.8" y1="160.3" x2="675.8" y2="165.4" stroke="#e83030" stroke-width="0.9"/><rect x="674.7" y="160.4" width="2.2" height="4.3" fill="#e83030"/>
<line x1="678.5" y1="155.2" x2="678.5" y2="163.1" stroke="#e83030" stroke-width="0.9"/><rect x="677.4" y="158.0" width="2.2" height="3.9" fill="#e83030"/>
<line x1="681.2" y1="154.4" x2="681.2" y2="161.8" stroke="#38e038" stroke-width="0.9"/><rect x="680.1" y="155.9" width="2.2" height="3.1" fill="#38e038"/>
<line x1="683.9" y1="153.7" x2="683.9" y2="162.1" stroke="#38e038" stroke-width="0.9"/><rect x="682.8" y="155.9" width="2.2" height="3.7" fill="#38e038"/>
<line x1="686.6" y1="156.5" x2="686.6" y2="161.8" stroke="#38e038" stroke-width="0.9"/><rect x="685.5" y="157.4" width="2.2" height="3.4" fill="#38e038"/>
<line x1="689.3" y1="156.9" x2="689.3" y2="161.4" stroke="#38e038" stroke-width="0.9"/><rect x="688.2" y="157.1" width="2.2" height="3.7" fill="#38e038"/>
<line x1="692.0" y1="160.6" x2="692.0" y2="163.7" stroke="#38e038" stroke-width="0.9"/><rect x="690.9" y="160.8" width="2.2" height="2.9" fill="#38e038"/>
<line x1="694.7" y1="158.2" x2="694.7" y2="166.8" stroke="#38e038" stroke-width="0.9"/><rect x="693.6" y="161.1" width="2.2" height="3.0" fill="#38e038"/>
<line x1="697.4" y1="163.9" x2="697.4" y2="167.4" stroke="#e83030" stroke-width="0.9"/><rect x="696.3" y="164.2" width="2.2" height="2.9" fill="#e83030"/>
<line x1="700.1" y1="160.6" x2="700.1" y2="166.2" stroke="#38e038" stroke-width="0.9"/><rect x="699.0" y="161.9" width="2.2" height="3.6" fill="#38e038"/>
<line x1="702.8" y1="161.3" x2="702.8" y2="169.0" stroke="#38e038" stroke-width="0.9"/><rect x="701.7" y="163.3" width="2.2" height="3.4" fill="#38e038"/>
<line x1="705.5" y1="163.9" x2="705.5" y2="170.3" stroke="#38e038" stroke-width="0.9"/><rect x="704.4" y="164.3" width="2.2" height="3.5" fill="#38e038"/>
<line x1="708.2" y1="163.1" x2="708.2" y2="169.8" stroke="#38e038" stroke-width="0.9"/><rect x="707.1" y="164.2" width="2.2" height="3.4" fill="#38e038"/>
<line x1="710.9" y1="165.9" x2="710.9" y2="170.0" stroke="#38e038" stroke-width="0.9"/><rect x="709.8" y="166.7" width="2.2" height="2.9" fill="#38e038"/>
<line x1="713.6" y1="165.9" x2="713.6" y2="171.4" stroke="#38e038" stroke-width="0.9"/><rect x="712.5" y="166.9" width="2.2" height="3.4" fill="#38e038"/>
<line x1="716.3" y1="168.7" x2="716.3" y2="175.1" stroke="#e83030" stroke-width="0.9"/><rect x="715.2" y="169.4" width="2.2" height="3.3" fill="#e83030"/>
<line x1="719.0" y1="165.5" x2="719.0" y2="171.3" stroke="#38e038" stroke-width="0.9"/><rect x="717.9" y="165.8" width="2.2" height="4.0" fill="#38e038"/>
<line x1="721.7" y1="166.3" x2="721.7" y2="173.0" stroke="#e83030" stroke-width="0.9"/><rect x="720.6" y="169.1" width="2.2" height="3.8" fill="#e83030"/>
<line x1="724.4" y1="165.9" x2="724.4" y2="172.0" stroke="#38e038" stroke-width="0.9"/><rect x="723.3" y="166.4" width="2.2" height="2.7" fill="#38e038"/>
<line x1="727.1" y1="164.6" x2="727.1" y2="172.3" stroke="#38e038" stroke-width="0.9"/><rect x="726.0" y="165.8" width="2.2" height="3.9" fill="#38e038"/>
<line x1="729.7" y1="167.1" x2="729.7" y2="175.2" stroke="#e83030" stroke-width="0.9"/><rect x="728.6" y="169.5" width="2.2" height="2.9" fill="#e83030"/>
<line x1="732.4" y1="167.1" x2="732.4" y2="174.2" stroke="#38e038" stroke-width="0.9"/><rect x="731.3" y="168.9" width="2.2" height="3.5" fill="#38e038"/>
<line x1="735.1" y1="169.2" x2="735.1" y2="173.3" stroke="#38e038" stroke-width="0.9"/><rect x="734.0" y="169.6" width="2.2" height="3.1" fill="#38e038"/>
<line x1="737.8" y1="168.8" x2="737.8" y2="174.8" stroke="#38e038" stroke-width="0.9"/><rect x="736.7" y="170.8" width="2.2" height="3.4" fill="#38e038"/>
<line x1="740.5" y1="172.4" x2="740.5" y2="180.0" stroke="#38e038" stroke-width="0.9"/><rect x="739.4" y="173.4" width="2.2" height="4.6" fill="#38e038"/>
<line x1="743.2" y1="175.3" x2="743.2" y2="181.3" stroke="#38e038" stroke-width="0.9"/><rect x="742.1" y="175.9" width="2.2" height="3.0" fill="#38e038"/>
<line x1="745.9" y1="176.6" x2="745.9" y2="180.7" stroke="#38e038" stroke-width="0.9"/><rect x="744.8" y="176.9" width="2.2" height="2.6" fill="#38e038"/>
<line x1="748.6" y1="177.4" x2="748.6" y2="181.6" stroke="#38e038" stroke-width="0.9"/><rect x="747.5" y="177.7" width="2.2" height="3.5" fill="#38e038"/>
<line x1="751.3" y1="179.9" x2="751.3" y2="184.8" stroke="#e83030" stroke-width="0.9"/><rect x="750.2" y="180.8" width="2.2" height="3.1" fill="#e83030"/>
<line x1="754.0" y1="179.3" x2="754.0" y2="185.0" stroke="#e83030" stroke-width="0.9"/><rect x="752.9" y="181.0" width="2.2" height="3.0" fill="#e83030"/>
<line x1="756.7" y1="177.5" x2="756.7" y2="185.4" stroke="#e83030" stroke-width="0.9"/><rect x="755.6" y="180.5" width="2.2" height="3.8" fill="#e83030"/>
<line x1="759.4" y1="178.2" x2="759.4" y2="182.4" stroke="#e83030" stroke-width="0.9"/><rect x="758.3" y="178.8" width="2.2" height="3.6" fill="#e83030"/>
<line x1="762.1" y1="174.5" x2="762.1" y2="181.3" stroke="#e83030" stroke-width="0.9"/><rect x="761.0" y="177.0" width="2.2" height="3.1" fill="#e83030"/>
<line x1="764.8" y1="173.2" x2="764.8" y2="178.1" stroke="#e83030" stroke-width="0.9"/><rect x="763.7" y="174.6" width="2.2" height="3.0" fill="#e83030"/>
<line x1="767.5" y1="171.3" x2="767.5" y2="179.3" stroke="#e83030" stroke-width="0.9"/><rect x="766.4" y="173.2" width="2.2" height="3.3" fill="#e83030"/>
<line x1="770.2" y1="170.0" x2="770.2" y2="176.1" stroke="#e83030" stroke-width="0.9"/><rect x="769.1" y="171.2" width="2.2" height="3.4" fill="#e83030"/>
<line x1="772.9" y1="166.4" x2="772.9" y2="173.6" stroke="#38e038" stroke-width="0.9"/><rect x="771.8" y="167.9" width="2.2" height="2.9" fill="#38e038"/>
<line x1="775.6" y1="166.3" x2="775.6" y2="174.9" stroke="#e83030" stroke-width="0.9"/><rect x="774.5" y="168.7" width="2.2" height="3.2" fill="#e83030"/>
<line x1="778.3" y1="164.8" x2="778.3" y2="173.3" stroke="#e83030" stroke-width="0.9"/><rect x="777.2" y="167.6" width="2.2" height="2.7" fill="#e83030"/>
<line x1="781.0" y1="162.3" x2="781.0" y2="168.8" stroke="#e83030" stroke-width="0.9"/><rect x="779.9" y="165.0" width="2.2" height="2.6" fill="#e83030"/>
<line x1="783.7" y1="160.7" x2="783.7" y2="167.1" stroke="#e83030" stroke-width="0.9"/><rect x="782.6" y="163.2" width="2.2" height="3.4" fill="#e83030"/>
<line x1="786.4" y1="159.8" x2="786.4" y2="166.4" stroke="#38e038" stroke-width="0.9"/><rect x="785.3" y="161.0" width="2.2" height="2.8" fill="#38e038"/>
<line x1="789.1" y1="161.0" x2="789.1" y2="165.7" stroke="#38e038" stroke-width="0.9"/><rect x="788.0" y="161.7" width="2.2" height="2.8" fill="#38e038"/>
<line x1="791.8" y1="164.1" x2="791.8" y2="168.3" stroke="#e83030" stroke-width="0.9"/><rect x="790.7" y="164.5" width="2.2" height="3.1" fill="#e83030"/>
<line x1="794.5" y1="164.5" x2="794.5" y2="170.2" stroke="#e83030" stroke-width="0.9"/><rect x="793.4" y="164.6" width="2.2" height="3.8" fill="#e83030"/>
<line x1="797.2" y1="160.5" x2="797.2" y2="165.9" stroke="#38e038" stroke-width="0.9"/><rect x="796.1" y="163.0" width="2.2" height="2.6" fill="#38e038"/>
<line x1="799.9" y1="161.3" x2="799.9" y2="167.4" stroke="#38e038" stroke-width="0.9"/><rect x="798.8" y="163.1" width="2.2" height="3.3" fill="#38e038"/>
<line x1="802.5" y1="161.8" x2="802.5" y2="168.4" stroke="#38e038" stroke-width="0.9"/><rect x="801.4" y="163.0" width="2.2" height="3.4" fill="#38e038"/>
<line x1="805.2" y1="165.0" x2="805.2" y2="170.0" stroke="#38e038" stroke-width="0.9"/><rect x="804.1" y="165.0" width="2.2" height="3.2" fill="#38e038"/>
<line x1="807.9" y1="164.3" x2="807.9" y2="171.8" stroke="#38e038" stroke-width="0.9"/><rect x="806.8" y="166.6" width="2.2" height="2.9" fill="#38e038"/>
<line x1="810.6" y1="166.2" x2="810.6" y2="170.7" stroke="#38e038" stroke-width="0.9"/><rect x="809.5" y="167.6" width="2.2" height="2.8" fill="#38e038"/>
<line x1="813.3" y1="168.5" x2="813.3" y2="173.3" stroke="#38e038" stroke-width="0.9"/><rect x="812.2" y="168.8" width="2.2" height="3.1" fill="#38e038"/>
<line x1="816.0" y1="169.7" x2="816.0" y2="174.4" stroke="#38e038" stroke-width="0.9"/><rect x="814.9" y="171.6" width="2.2" height="2.6" fill="#38e038"/>
<line x1="818.7" y1="170.5" x2="818.7" y2="175.9" stroke="#38e038" stroke-width="0.9"/><rect x="817.6" y="172.0" width="2.2" height="3.7" fill="#38e038"/>
<line x1="821.4" y1="171.7" x2="821.4" y2="178.0" stroke="#38e038" stroke-width="0.9"/><rect x="820.3" y="174.6" width="2.2" height="3.1" fill="#38e038"/>
<line x1="824.1" y1="172.4" x2="824.1" y2="181.1" stroke="#38e038" stroke-width="0.9"/><rect x="823.0" y="174.6" width="2.2" height="4.0" fill="#38e038"/>
<line x1="826.8" y1="176.4" x2="826.8" y2="184.7" stroke="#e83030" stroke-width="0.9"/><rect x="825.7" y="177.9" width="2.2" height="4.0" fill="#e83030"/>
<line x1="829.5" y1="174.3" x2="829.5" y2="182.2" stroke="#38e038" stroke-width="0.9"/><rect x="828.4" y="176.6" width="2.2" height="2.7" fill="#38e038"/>
<line x1="832.2" y1="174.6" x2="832.2" y2="180.4" stroke="#38e038" stroke-width="0.9"/><rect x="831.1" y="176.9" width="2.2" height="3.0" fill="#38e038"/>
<line x1="834.9" y1="177.8" x2="834.9" y2="183.6" stroke="#e83030" stroke-width="0.9"/><rect x="833.8" y="180.2" width="2.2" height="2.9" fill="#e83030"/>
<line x1="837.6" y1="178.7" x2="837.6" y2="184.0" stroke="#e83030" stroke-width="0.9"/><rect x="836.5" y="179.3" width="2.2" height="3.9" fill="#e83030"/>
<line x1="840.3" y1="176.3" x2="840.3" y2="179.9" stroke="#38e038" stroke-width="0.9"/><rect x="839.2" y="176.4" width="2.2" height="3.0" fill="#38e038"/>
<line x1="843.0" y1="173.6" x2="843.0" y2="182.2" stroke="#38e038" stroke-width="0.9"/><rect x="841.9" y="175.6" width="2.2" height="3.9" fill="#38e038"/>
<line x1="845.7" y1="175.6" x2="845.7" y2="181.2" stroke="#38e038" stroke-width="0.9"/><rect x="844.6" y="175.9" width="2.2" height="3.7" fill="#38e038"/>
<line x1="848.4" y1="177.2" x2="848.4" y2="184.5" stroke="#e83030" stroke-width="0.9"/><rect x="847.3" y="179.8" width="2.2" height="3.0" fill="#e83030"/>
<line x1="851.1" y1="176.7" x2="851.1" y2="183.8" stroke="#38e038" stroke-width="0.9"/><rect x="850.0" y="177.0" width="2.2" height="3.8" fill="#38e038"/>
<line x1="853.8" y1="176.1" x2="853.8" y2="182.4" stroke="#38e038" stroke-width="0.9"/><rect x="852.7" y="178.5" width="2.2" height="3.1" fill="#38e038"/>
<line x1="856.5" y1="180.5" x2="856.5" y2="187.2" stroke="#e83030" stroke-width="0.9"/><rect x="855.4" y="181.6" width="2.2" height="3.4" fill="#e83030"/>
<line x1="859.2" y1="178.7" x2="859.2" y2="183.8" stroke="#e83030" stroke-width="0.9"/><rect x="858.1" y="180.9" width="2.2" height="2.8" fill="#e83030"/>
<line x1="861.9" y1="178.9" x2="861.9" y2="186.6" stroke="#e83030" stroke-width="0.9"/><rect x="860.8" y="180.8" width="2.2" height="2.9" fill="#e83030"/>
<line x1="864.6" y1="179.4" x2="864.6" y2="183.8" stroke="#e83030" stroke-width="0.9"/><rect x="863.5" y="180.3" width="2.2" height="3.5" fill="#e83030"/>
<line x1="867.3" y1="176.1" x2="867.3" y2="181.9" stroke="#e83030" stroke-width="0.9"/><rect x="866.2" y="177.9" width="2.2" height="2.7" fill="#e83030"/>
<line x1="870.0" y1="174.1" x2="870.0" y2="179.0" stroke="#38e038" stroke-width="0.9"/><rect x="868.9" y="174.5" width="2.2" height="3.8" fill="#38e038"/>
<line x1="872.7" y1="176.4" x2="872.7" y2="180.0" stroke="#38e038" stroke-width="0.9"/><rect x="871.6" y="176.4" width="2.2" height="2.5" fill="#38e038"/>
<line x1="875.3" y1="174.9" x2="875.3" y2="180.4" stroke="#38e038" stroke-width="0.9"/><rect x="874.2" y="175.6" width="2.2" height="3.0" fill="#38e038"/>
<line x1="878.0" y1="176.7" x2="878.0" y2="182.8" stroke="#e83030" stroke-width="0.9"/><rect x="876.9" y="178.6" width="2.2" height="2.8" fill="#e83030"/>
<line x1="880.7" y1="177.2" x2="880.7" y2="182.3" stroke="#e83030" stroke-width="0.9"/><rect x="879.6" y="178.0" width="2.2" height="3.9" fill="#e83030"/>
<line x1="883.4" y1="174.7" x2="883.4" y2="183.1" stroke="#e83030" stroke-width="0.9"/><rect x="882.3" y="177.3" width="2.2" height="3.5" fill="#e83030"/>
<line x1="886.1" y1="175.7" x2="886.1" y2="180.6" stroke="#38e038" stroke-width="0.9"/><rect x="885.0" y="175.7" width="2.2" height="2.9" fill="#38e038"/>
<line x1="888.8" y1="175.7" x2="888.8" y2="182.0" stroke="#e83030" stroke-width="0.9"/><rect x="887.7" y="177.6" width="2.2" height="3.0" fill="#e83030"/>
<line x1="891.5" y1="174.5" x2="891.5" y2="181.5" stroke="#38e038" stroke-width="0.9"/><rect x="890.4" y="175.2" width="2.2" height="3.6" fill="#38e038"/>
<line x1="894.2" y1="174.9" x2="894.2" y2="180.2" stroke="#38e038" stroke-width="0.9"/><rect x="893.1" y="176.2" width="2.2" height="3.3" fill="#38e038"/>
<line x1="896.9" y1="178.4" x2="896.9" y2="183.8" stroke="#e83030" stroke-width="0.9"/><rect x="895.8" y="178.5" width="2.2" height="3.7" fill="#e83030"/>
<line x1="899.6" y1="178.1" x2="899.6" y2="183.3" stroke="#e83030" stroke-width="0.9"/><rect x="898.5" y="178.7" width="2.2" height="2.7" fill="#e83030"/>
<line x1="902.3" y1="174.3" x2="902.3" y2="180.7" stroke="#38e038" stroke-width="0.9"/><rect x="901.2" y="176.8" width="2.2" height="3.5" fill="#38e038"/>
<line x1="905.0" y1="176.9" x2="905.0" y2="182.7" stroke="#38e038" stroke-width="0.9"/><rect x="903.9" y="177.0" width="2.2" height="3.0" fill="#38e038"/>
<line x1="907.7" y1="179.0" x2="907.7" y2="185.2" stroke="#e83030" stroke-width="0.9"/><rect x="906.6" y="179.0" width="2.2" height="3.6" fill="#e83030"/>
<line x1="910.4" y1="177.0" x2="910.4" y2="183.8" stroke="#e83030" stroke-width="0.9"/><rect x="909.3" y="179.2" width="2.2" height="3.2" fill="#e83030"/>
<line x1="913.1" y1="176.2" x2="913.1" y2="179.7" stroke="#38e038" stroke-width="0.9"/><rect x="912.0" y="176.9" width="2.2" height="2.7" fill="#38e038"/>
<line x1="915.8" y1="175.8" x2="915.8" y2="184.0" stroke="#38e038" stroke-width="0.9"/><rect x="914.7" y="177.8" width="2.2" height="3.6" fill="#38e038"/>
<line x1="918.5" y1="179.9" x2="918.5" y2="185.7" stroke="#e83030" stroke-width="0.9"/><rect x="917.4" y="181.5" width="2.2" height="2.9" fill="#e83030"/>
<line x1="921.2" y1="179.5" x2="921.2" y2="185.5" stroke="#e83030" stroke-width="0.9"/><rect x="920.1" y="180.3" width="2.2" height="3.3" fill="#e83030"/>
<line x1="923.9" y1="176.5" x2="923.9" y2="182.0" stroke="#38e038" stroke-width="0.9"/><rect x="922.8" y="179.2" width="2.2" height="2.8" fill="#38e038"/>
<line x1="926.6" y1="177.4" x2="926.6" y2="185.3" stroke="#38e038" stroke-width="0.9"/><rect x="925.5" y="179.6" width="2.2" height="2.9" fill="#38e038"/>
<line x1="929.3" y1="179.3" x2="929.3" y2="185.9" stroke="#e83030" stroke-width="0.9"/><rect x="928.2" y="182.0" width="2.2" height="3.0" fill="#e83030"/>
<line x1="932.0" y1="179.6" x2="932.0" y2="187.4" stroke="#e83030" stroke-width="0.9"/><rect x="930.9" y="181.5" width="2.2" height="3.9" fill="#e83030"/>
<line x1="934.7" y1="176.7" x2="934.7" y2="184.6" stroke="#38e038" stroke-width="0.9"/><rect x="933.6" y="178.1" width="2.2" height="4.0" fill="#38e038"/>
<line x1="937.4" y1="179.8" x2="937.4" y2="187.2" stroke="#38e038" stroke-width="0.9"/><rect x="936.3" y="182.4" width="2.2" height="3.5" fill="#38e038"/>
<line x1="940.1" y1="184.6" x2="940.1" y2="191.9" stroke="#38e038" stroke-width="0.9"/><rect x="939.0" y="186.3" width="2.2" height="4.7" fill="#38e038"/>
<line x1="942.8" y1="188.6" x2="942.8" y2="194.6" stroke="#38e038" stroke-width="0.9"/><rect x="941.7" y="190.5" width="2.2" height="3.9" fill="#38e038"/>
<line x1="945.5" y1="195.0" x2="945.5" y2="198.1" stroke="#e83030" stroke-width="0.9"/><rect x="944.4" y="195.1" width="2.2" height="2.7" fill="#e83030"/>
<line x1="948.1" y1="192.7" x2="948.1" y2="196.2" stroke="#38e038" stroke-width="0.9"/><rect x="947.0" y="193.1" width="2.2" height="3.0" fill="#38e038"/>
<line x1="950.8" y1="193.3" x2="950.8" y2="200.4" stroke="#38e038" stroke-width="0.9"/><rect x="949.7" y="195.4" width="2.2" height="3.1" fill="#38e038"/>
<line x1="953.5" y1="195.2" x2="953.5" y2="200.8" stroke="#38e038" stroke-width="0.9"/><rect x="952.4" y="195.4" width="2.2" height="3.6" fill="#38e038"/>
<line x1="956.2" y1="195.4" x2="956.2" y2="204.2" stroke="#38e038" stroke-width="0.9"/><rect x="955.1" y="197.8" width="2.2" height="3.7" fill="#38e038"/>
<line x1="958.9" y1="196.5" x2="958.9" y2="205.9" stroke="#38e038" stroke-width="0.9"/><rect x="957.8" y="199.3" width="2.2" height="3.8" fill="#38e038"/>
<line x1="961.6" y1="200.2" x2="961.6" y2="203.4" stroke="#38e038" stroke-width="0.9"/><rect x="960.5" y="200.5" width="2.2" height="2.8" fill="#38e038"/>
<line x1="964.3" y1="199.4" x2="964.3" y2="207.5" stroke="#38e038" stroke-width="0.9"/><rect x="963.2" y="201.3" width="2.2" height="3.7" fill="#38e038"/>
<line x1="967.0" y1="203.5" x2="967.0" y2="207.1" stroke="#38e038" stroke-width="0.9"/><rect x="965.9" y="203.8" width="2.2" height="2.9" fill="#38e038"/>
<line x1="969.7" y1="204.5" x2="969.7" y2="209.5" stroke="#38e038" stroke-width="0.9"/><rect x="968.6" y="205.5" width="2.2" height="2.8" fill="#38e038"/>
<line x1="972.4" y1="206.7" x2="972.4" y2="211.5" stroke="#38e038" stroke-width="0.9"/><rect x="971.3" y="207.5" width="2.2" height="3.1" fill="#38e038"/>
<line x1="975.1" y1="207.3" x2="975.1" y2="214.2" stroke="#38e038" stroke-width="0.9"/><rect x="974.0" y="208.2" width="2.2" height="3.1" fill="#38e038"/>
<line x1="977.8" y1="204.8" x2="977.8" y2="213.2" stroke="#e83030" stroke-width="0.9"/><rect x="976.7" y="207.3" width="2.2" height="4.0" fill="#e83030"/>
<line x1="980.5" y1="202.1" x2="980.5" y2="207.9" stroke="#e83030" stroke-width="0.9"/><rect x="979.4" y="203.3" width="2.2" height="3.3" fill="#e83030"/>
<line x1="983.2" y1="200.4" x2="983.2" y2="207.2" stroke="#38e038" stroke-width="0.9"/><rect x="982.1" y="202.5" width="2.2" height="3.0" fill="#38e038"/>
<line x1="985.9" y1="204.6" x2="985.9" y2="211.1" stroke="#e83030" stroke-width="0.9"/><rect x="984.8" y="204.9" width="2.2" height="3.8" fill="#e83030"/>
<line x1="988.6" y1="202.5" x2="988.6" y2="207.9" stroke="#38e038" stroke-width="0.9"/><rect x="987.5" y="203.1" width="2.2" height="2.5" fill="#38e038"/>
<line x1="991.3" y1="204.7" x2="991.3" y2="210.2" stroke="#e83030" stroke-width="0.9"/><rect x="990.2" y="206.2" width="2.2" height="2.5" fill="#e83030"/>
<line x1="994.0" y1="202.6" x2="994.0" y2="207.9" stroke="#38e038" stroke-width="0.9"/><rect x="992.9" y="204.1" width="2.2" height="2.8" fill="#38e038"/>
<line x1="996.7" y1="203.0" x2="996.7" y2="209.6" stroke="#e83030" stroke-width="0.9"/><rect x="995.6" y="205.8" width="2.2" height="2.9" fill="#e83030"/>
<line x1="999.4" y1="201.9" x2="999.4" y2="207.2" stroke="#38e038" stroke-width="0.9"/><rect x="998.3" y="203.4" width="2.2" height="3.5" fill="#38e038"/>
<line x1="1002.1" y1="203.6" x2="1002.1" y2="210.7" stroke="#e83030" stroke-width="0.9"/><rect x="1001.0" y="206.0" width="2.2" height="2.6" fill="#e83030"/>
<line x1="1004.8" y1="205.0" x2="1004.8" y2="210.7" stroke="#e83030" stroke-width="0.9"/><rect x="1003.7" y="206.1" width="2.2" height="3.4" fill="#e83030"/>
<line x1="1007.5" y1="199.4" x2="1007.5" y2="206.2" stroke="#e83030" stroke-width="0.9"/><rect x="1006.4" y="202.1" width="2.2" height="3.8" fill="#e83030"/>
<line x1="1010.2" y1="196.7" x2="1010.2" y2="203.3" stroke="#e83030" stroke-width="0.9"/><rect x="1009.1" y="196.8" width="2.2" height="5.9" fill="#e83030"/>
<line x1="1012.9" y1="194.1" x2="1012.9" y2="200.6" stroke="#e83030" stroke-width="0.9"/><rect x="1011.8" y="195.6" width="2.2" height="3.9" fill="#e83030"/>
<line x1="1015.6" y1="192.2" x2="1015.6" y2="197.6" stroke="#e83030" stroke-width="0.9"/><rect x="1014.5" y="192.9" width="2.2" height="3.3" fill="#e83030"/>
<line x1="1018.3" y1="185.0" x2="1018.3" y2="254.0" stroke="#e83030" stroke-width="0.9"/><rect x="1017.2" y="190.3" width="2.2" height="3.6" fill="#e83030"/>
<line x1="1020.9" y1="186.8" x2="1020.9" y2="192.8" stroke="#38e038" stroke-width="0.9"/><rect x="1019.8" y="187.3" width="2.2" height="3.0" fill="#38e038"/>
<line x1="1023.6" y1="187.3" x2="1023.6" y2="192.8" stroke="#e83030" stroke-width="0.9"/><rect x="1022.5" y="187.8" width="2.2" height="3.6" fill="#e83030"/>
<line x1="1026.3" y1="187.0" x2="1026.3" y2="192.2" stroke="#e83030" stroke-width="0.9"/><rect x="1025.2" y="187.4" width="2.2" height="3.4" fill="#e83030"/>
<line x1="1029.0" y1="186.3" x2="1029.0" y2="190.6" stroke="#e83030" stroke-width="0.9"/><rect x="1027.9" y="186.9" width="2.2" height="2.9" fill="#e83030"/>
<line x1="1031.7" y1="184.6" x2="1031.7" y2="189.3" stroke="#e83030" stroke-width="0.9"/><rect x="1030.6" y="185.1" width="2.2" height="3.8" fill="#e83030"/>
<line x1="1034.4" y1="181.4" x2="1034.4" y2="186.4" stroke="#e83030" stroke-width="0.9"/><rect x="1033.3" y="183.0" width="2.2" height="3.0" fill="#e83030"/>
<line x1="1037.1" y1="178.8" x2="1037.1" y2="186.7" stroke="#e83030" stroke-width="0.9"/><rect x="1036.0" y="181.8" width="2.2" height="2.8" fill="#e83030"/>
<line x1="1039.8" y1="179.9" x2="1039.8" y2="185.3" stroke="#e83030" stroke-width="0.9"/><rect x="1038.7" y="180.2" width="2.2" height="3.9" fill="#e83030"/>
<line x1="1042.5" y1="177.4" x2="1042.5" y2="184.6" stroke="#e83030" stroke-width="0.9"/><rect x="1041.4" y="179.6" width="2.2" height="3.7" fill="#e83030"/>
<line x1="1045.2" y1="176.9" x2="1045.2" y2="181.3" stroke="#e83030" stroke-width="0.9"/><rect x="1044.1" y="177.3" width="2.2" height="3.5" fill="#e83030"/>
<line x1="1047.9" y1="176.1" x2="1047.9" y2="182.3" stroke="#38e038" stroke-width="0.9"/><rect x="1046.8" y="177.3" width="2.2" height="2.6" fill="#38e038"/>
<line x1="1050.6" y1="175.8" x2="1050.6" y2="182.3" stroke="#38e038" stroke-width="0.9"/><rect x="1049.5" y="177.7" width="2.2" height="3.3" fill="#38e038"/>
<line x1="1053.3" y1="178.6" x2="1053.3" y2="185.5" stroke="#38e038" stroke-width="0.9"/><rect x="1052.2" y="179.9" width="2.2" height="3.4" fill="#38e038"/>
<line x1="1056.0" y1="181.7" x2="1056.0" y2="188.8" stroke="#38e038" stroke-width="0.9"/><rect x="1054.9" y="183.5" width="2.2" height="3.1" fill="#38e038"/>
<polyline points="349.6,99.6 352.3,99.6 355.0,99.6 357.7,99.6 360.4,99.7 363.1,99.7 365.7,99.6 368.4,99.7 371.1,99.6 373.8,99.7 376.5,99.7 379.2,99.6 381.9,99.7 384.6,99.8 387.3,99.8 390.0,99.8 392.7,99.9 395.4,100.0 398.1,100.0 400.8,100.1 403.5,100.2 406.2,100.1 408.9,100.2 411.6,100.2 414.3,100.2 417.0,100.2 419.7,100.2 422.4,100.3 425.1,100.3 427.8,100.3 430.5,100.4 433.2,100.4 435.9,100.5 438.5,100.4 441.2,100.4 443.9,100.4 446.6,100.5 449.3,100.5 452.0,100.5 454.7,100.6 457.4,100.6 460.1,100.6 462.8,100.7 465.5,100.7 468.2,100.7 470.9,100.7 473.6,100.8 476.3,100.8 479.0,100.9 481.7,100.9 484.4,101.0 487.1,100.9 489.8,100.9 492.5,100.9 495.2,100.9 497.9,100.9 500.6,100.8 503.3,100.9 506.0,101.2 508.7,101.4 511.3,101.8 514.0,102.3 516.7,102.9 519.4,103.5 522.1,104.3 524.8,105.0 527.5,105.8 530.2,106.7 532.9,107.4 535.6,108.0 538.3,108.4 541.0,108.9 543.7,109.3 546.4,109.7 549.1,110.0 551.8,110.2 554.5,110.5 557.2,110.8 559.9,111.1 562.6,111.4 565.3,111.8 568.0,112.2 570.7,112.7 573.4,113.4 576.1,113.9 578.8,114.4 581.5,115.0 584.1,115.6 586.8,116.0 589.5,116.4 592.2,116.8 594.9,117.2 597.6,117.6 600.3,117.9 603.0,118.2 605.7,118.7 608.4,119.3 611.1,120.0 613.8,120.9 616.5,121.8 619.2,122.8 621.9,123.8 624.6,125.0 627.3,126.2 630.0,127.5 632.7,128.7 635.4,130.0 638.1,131.4 640.8,132.8 643.5,134.3 646.2,135.9 648.9,137.5 651.6,139.0 654.3,140.5 656.9,141.8 659.6,142.8 662.3,143.9 665.0,145.1 667.7,146.4 670.4,147.8 673.1,149.1 675.8,150.6 678.5,152.0 681.2,153.5 683.9,154.8 686.6,156.0 689.3,157.0 692.0,157.7 694.7,158.2 697.4,158.4 700.1,158.4 702.8,158.4 705.5,158.5 708.2,158.7 710.9,158.8 713.6,159.2 716.3,159.6 719.0,159.9 721.7,160.4 724.4,160.9 727.1,161.4 729.7,161.9 732.4,162.5 735.1,163.1 737.8,163.5 740.5,164.0 743.2,164.4 745.9,164.8 748.6,165.2 751.3,165.5 754.0,166.0 756.7,166.5 759.4,167.1 762.1,168.0 764.8,168.8 767.5,169.6 770.2,170.5 772.9,171.3 775.6,172.0 778.3,172.7 781.0,173.2 783.7,173.5 786.4,173.5 789.1,173.5 791.8,173.3 794.5,173.1 797.2,172.8 799.9,172.4 802.5,171.8 805.2,171.2 807.9,170.6 810.6,170.1 813.3,169.7 816.0,169.3 818.7,169.0 821.4,168.8 824.1,168.6 826.8,168.6 829.5,168.7 832.2,168.8 834.9,169.0 837.6,169.4 840.3,169.9 843.0,170.5 845.7,171.1 848.4,171.7 851.1,172.2 853.8,172.8 856.5,173.4 859.2,173.9 861.9,174.3 864.6,174.7 867.3,175.1 870.0,175.4 872.7,175.8 875.3,176.3 878.0,176.7 880.7,177.0 883.4,177.3 886.1,177.5 888.8,177.6 891.5,177.6 894.2,177.7 896.9,177.8 899.6,177.9 902.3,177.9 905.0,177.8 907.7,177.9 910.4,177.9 913.1,177.9 915.8,178.1 918.5,178.1 921.2,178.1 923.9,178.3 926.6,178.4 929.3,178.5 932.0,178.5 934.7,178.6 937.4,178.8 940.1,179.0 942.8,179.1 945.5,179.4 948.1,179.6 950.8,179.8 953.5,179.9 956.2,180.1 958.9,180.5 961.6,181.3 964.3,182.3 967.0,183.3 969.7,184.3 972.4,185.4 975.1,186.4 977.8,187.6 980.5,188.8 983.2,189.9 985.9,191.1 988.6,192.3 991.3,193.5 994.0,194.8 996.7,196.1 999.4,197.0 1002.1,197.4 1004.8,198.1 1007.5,198.6 1010.2,199.1 1012.9,199.7 1015.6,200.2 1018.3,200.7 1020.9,201.1 1023.6,201.5 1026.3,201.9 1029.0,201.9 1031.7,201.5 1034.4,201.0 1037.1,200.4 1039.8,199.6 1042.5,198.9 1045.2,198.1 1047.9,197.2 1050.6,196.4 1053.3,195.6 1056.0,194.6 1058.7,193.6 1061.4,192.6 1064.1,191.6 1066.8,190.5 1069.5,189.7 1072.2,189.0 1074.9,188.6 1077.6,188.4" fill="none" stroke="#14145a" stroke-width="2" opacity="0.75"/>
<polyline points="341.5,99.6 344.2,99.6 346.9,99.7 349.6,99.6 352.3,99.7 355.0,99.7 357.7,99.6 360.4,99.7 363.1,99.6 365.7,99.7 368.4,99.7 371.1,99.6 373.8,99.7 376.5,99.9 379.2,99.8 381.9,99.8 384.6,100.0 387.3,100.1 390.0,100.2 392.7,100.2 395.4,100.4 398.1,100.3 400.8,100.4 403.5,100.4 406.2,100.4 408.9,100.3 411.6,100.3 414.3,100.5 417.0,100.4 419.7,100.5 422.4,100.6 425.1,100.6 427.8,100.6 430.5,100.6 433.2,100.5 435.9,100.5 438.5,100.6 441.2,100.6 443.9,100.6 446.6,100.7 449.3,100.7 452.0,100.7 454.7,100.8 457.4,100.9 460.1,100.8 462.8,100.9 465.5,100.9 468.2,101.0 470.9,101.1 473.6,101.0 476.3,101.1 479.0,101.0 481.7,101.0 484.4,101.1 487.1,101.0 489.8,101.0 492.5,100.8 495.2,101.0 497.9,101.4 500.6,101.8 503.3,102.4 506.0,103.0 508.7,103.9 511.3,104.9 514.0,105.9 516.7,106.9 519.4,108.0 522.1,109.1 524.8,109.9 527.5,110.6 530.2,111.0 532.9,111.4 535.6,111.7 538.3,112.0 541.0,112.3 543.7,112.4 546.4,112.6 549.1,112.9 551.8,113.0 554.5,113.3 557.2,113.6 559.9,114.1 562.6,114.7 565.3,115.5 568.0,116.1 570.7,116.7 573.4,117.3 576.1,118.0 578.8,118.3 581.5,118.8 584.1,119.1 586.8,119.5 589.5,119.8 592.2,120.1 594.9,120.3 597.6,120.8 600.3,121.4 603.0,122.4 605.7,123.6 608.4,124.7 611.1,125.9 613.8,127.2 616.5,128.6 619.2,130.2 621.9,131.7 624.6,133.3 627.3,134.7 630.0,136.4 632.7,138.1 635.4,139.8 638.1,141.7 640.8,143.6 643.5,145.4 646.2,146.9 648.9,148.2 651.6,149.1 654.3,150.2 656.9,151.3 659.6,152.7 662.3,154.1 665.0,155.5 667.7,157.0 670.4,158.5 673.1,160.2 675.8,161.5 678.5,162.5 681.2,163.4 683.9,163.8 686.6,163.8 689.3,163.4 692.0,162.7 694.7,162.2 697.4,161.9 700.1,161.8 702.8,161.7 705.5,161.9 708.2,162.2 710.9,162.4 713.6,162.8 716.3,163.3 719.0,163.9 721.7,164.3 724.4,165.0 727.1,165.6 729.7,166.1 732.4,166.6 735.1,166.9 737.8,167.2 740.5,167.5 743.2,167.7 745.9,168.3 748.6,168.9 751.3,169.5 754.0,170.6 756.7,171.6 759.4,172.6 762.1,173.7 764.8,174.6 767.5,175.4 770.2,176.0 772.9,176.4 775.6,176.4 778.3,176.2 781.0,175.8 783.7,175.2 786.4,174.7 789.1,173.9 791.8,173.2 794.5,172.1 797.2,171.0 799.9,170.1 802.5,169.4 805.2,168.8 807.9,168.3 810.6,167.9 813.3,167.8 816.0,167.6 818.7,167.7 821.4,167.9 824.1,168.2 826.8,168.7 829.5,169.3 832.2,170.1 834.9,171.1 837.6,172.0 840.3,172.8 843.0,173.6 845.7,174.4 848.4,175.1 851.1,175.6 853.8,176.1 856.5,176.5 859.2,176.9 861.9,177.3 864.6,177.7 867.3,178.2 870.0,178.6 872.7,178.9 875.3,179.1 878.0,179.3 880.7,179.1 883.4,179.0 886.1,179.0 888.8,179.0 891.5,178.9 894.2,178.8 896.9,178.6 899.6,178.6 902.3,178.5 905.0,178.5 907.7,178.6 910.4,178.6 913.1,178.6 915.8,178.8 918.5,179.0 921.2,179.0 923.9,179.0 926.6,179.1 929.3,179.4 932.0,179.6 934.7,179.7 937.4,180.0 940.1,180.3 942.8,180.5 945.5,180.6 948.1,180.8 950.8,181.5 953.5,182.6 956.2,184.1 958.9,185.5 961.6,186.8 964.3,188.3 967.0,189.6 969.7,191.1 972.4,192.6 975.1,193.9 977.8,195.3 980.5,196.8 983.2,198.2 985.9,199.8 988.6,201.2 991.3,202.0 994.0,202.1 996.7,202.6 999.4,202.8 1002.1,203.2 1004.8,203.6 1007.5,204.0 1010.2,204.2 1012.9,204.5 1015.6,204.7 1018.3,204.9 1020.9,204.5 1023.6,203.6 1026.3,202.6 1029.0,201.4 1031.7,200.0 1034.4,198.8 1037.1,197.4 1039.8,196.2 1042.5,195.0 1045.2,193.8 1047.9,192.4 1050.6,191.1 1053.3,189.7 1056.0,188.5 1058.7,187.1 1061.4,186.2 1064.1,185.5 1066.8,185.2 1069.5,185.4" fill="none" stroke="#801818" stroke-width="1.2"/>
<polyline points="336.1,99.6 338.8,99.5 341.5,99.7 344.2,99.6 346.9,99.7 349.6,99.7 352.3,99.6 355.0,99.8 357.7,99.6 360.4,99.7 363.1,99.7 365.7,99.6 368.4,99.7 371.1,100.0 373.8,99.9 376.5,99.9 379.2,100.1 381.9,100.4 384.6,100.4 387.3,100.4 390.0,100.6 392.7,100.4 395.4,100.6 398.1,100.6 400.8,100.4 403.5,100.3 406.2,100.3 408.9,100.6 411.6,100.5 414.3,100.6 417.0,100.7 419.7,100.7 422.4,100.8 425.1,100.6 427.8,100.5 430.5,100.5 433.2,100.7 435.9,100.7 438.5,100.7 441.2,100.8 443.9,100.8 446.6,100.8 449.3,100.9 452.0,101.0 454.7,100.9 457.4,101.0 460.1,101.0 462.8,101.2 465.5,101.2 468.2,101.1 470.9,101.3 473.6,101.1 476.3,101.0 479.0,101.1 481.7,100.9 484.4,100.9 487.1,100.8 489.8,101.0 492.5,101.6 495.2,102.2 497.9,103.1 500.6,104.0 503.3,105.2 506.0,106.5 508.7,107.9 511.3,109.1 514.0,110.4 516.7,111.6 519.4,112.4 522.1,113.0 524.8,113.2 527.5,113.4 530.2,113.5 532.9,113.7 535.6,113.7 538.3,113.6 541.0,113.7 543.7,113.9 546.4,113.9 549.1,114.2 551.8,114.6 554.5,115.1 557.2,115.8 559.9,116.9 562.6,117.6 565.3,118.3 568.0,118.9 570.7,119.6 573.4,119.9 576.1,120.3 578.8,120.6 581.5,120.9 584.1,121.1 586.8,121.3 589.5,121.4 592.2,121.9 594.9,122.8 597.6,124.1 600.3,125.6 603.0,126.9 605.7,128.4 608.4,130.1 611.1,131.7 613.8,133.6 616.5,135.4 619.2,137.1 621.9,138.7 624.6,140.5 627.3,142.4 630.0,144.4 632.7,146.5 635.4,148.5 638.1,150.4 640.8,151.9 643.5,152.9 646.2,153.4 648.9,154.3 651.6,155.3 654.3,156.6 656.9,158.1 659.6,159.6 662.3,161.2 665.0,162.7 667.7,164.6 670.4,165.7 673.1,166.5 675.8,167.1 678.5,167.0 681.2,166.4 683.9,165.2 686.6,163.8 689.3,162.8 692.0,162.2 694.7,161.9 697.4,161.7 700.1,162.1 702.8,162.5 705.5,162.8 708.2,163.4 710.9,164.0 713.6,164.8 716.3,165.3 719.0,166.2 721.7,167.0 724.4,167.5 727.1,168.0 729.7,168.2 732.4,168.4 735.1,168.6 737.8,168.8 740.5,169.5 743.2,170.1 745.9,170.9 748.6,172.4 751.3,173.7 754.0,174.8 756.7,176.1 759.4,177.0 762.1,177.8 764.8,178.4 767.5,178.4 770.2,178.2 772.9,177.4 775.6,176.6 778.3,175.5 781.0,174.6 783.7,173.4 786.4,172.3 789.1,170.8 791.8,169.3 794.5,168.2 797.2,167.4 799.9,166.8 802.5,166.4 805.2,166.2 807.9,166.3 810.6,166.3 813.3,166.7 816.0,167.2 818.7,167.9 821.4,168.7 824.1,169.8 826.8,171.0 829.5,172.3 832.2,173.6 834.9,174.4 837.6,175.4 840.3,176.3 843.0,177.1 845.7,177.5 848.4,177.9 851.1,178.2 853.8,178.5 856.5,178.8 859.2,179.2 861.9,179.7 864.6,180.0 867.3,180.2 870.0,180.3 872.7,180.3 875.3,179.8 878.0,179.5 880.7,179.4 883.4,179.3 886.1,179.1 888.8,178.9 891.5,178.6 894.2,178.6 896.9,178.4 899.6,178.5 902.3,178.7 905.0,178.6 907.7,178.7 910.4,179.0 913.1,179.2 915.8,179.1 918.5,179.2 921.2,179.2 923.9,179.7 926.6,180.1 929.3,180.1 932.0,180.5 934.7,180.9 937.4,181.1 940.1,181.2 942.8,181.4 945.5,182.3 948.1,184.0 950.8,186.1 953.5,187.9 956.2,189.5 958.9,191.3 961.6,192.8 964.3,194.6 967.0,196.3 969.7,197.7 972.4,199.2 975.1,200.7 977.8,202.2 980.5,203.9 983.2,205.4 985.9,205.8 988.6,205.3 991.3,205.3 994.0,205.2 996.7,205.3 999.4,205.5 1002.1,205.8 1004.8,205.8 1007.5,206.0 1010.2,206.0 1012.9,206.0 1015.6,205.2 1018.3,203.6 1020.9,202.0 1023.6,200.1 1026.3,198.2 1029.0,196.6 1031.7,194.8 1034.4,193.4 1037.1,192.1 1039.8,190.7 1042.5,189.1 1045.2,187.7 1047.9,186.2 1050.6,184.9 1053.3,183.3 1056.0,182.6 1058.7,182.3 1061.4,182.5 1064.1,183.3" fill="none" stroke="#b09068" stroke-width="1.2"/></g>
  <line x1="328" y1="256" x2="1243" y2="256" stroke="#c8c8c8" stroke-width="2"/>
  <line x1="328" y1="275.5" x2="1241" y2="275.5" stroke="#2a0810" stroke-width="1" stroke-dasharray="2,1"/>
  <line x1="328" y1="285" x2="1241" y2="285" stroke="#8a1020" stroke-width="1.5"/>
  <g stroke="#8fcf8f" stroke-width="0.9" opacity="0.9"><line x1="328.0" y1="285" x2="328.0" y2="285.8"/>
<line x1="330.7" y1="285" x2="330.7" y2="285.5"/>
<line x1="333.4" y1="285" x2="333.4" y2="286.5"/>
<line x1="336.1" y1="285" x2="336.1" y2="286.8"/>
<line x1="338.8" y1="285" x2="338.8" y2="286.6"/>
<line x1="341.5" y1="285" x2="341.5" y2="286.5"/>
<line x1="344.2" y1="285" x2="344.2" y2="286.8"/>
<line x1="346.9" y1="285" x2="346.9" y2="286.5"/>
<line x1="349.6" y1="285" x2="349.6" y2="286.4"/>
<line x1="352.3" y1="285" x2="352.3" y2="286.1"/>
<line x1="355.0" y1="285" x2="355.0" y2="285.8"/>
<line x1="357.7" y1="285" x2="357.7" y2="286.5"/>
<line x1="360.4" y1="285" x2="360.4" y2="285.4"/>
<line x1="363.1" y1="285" x2="363.1" y2="286.1"/>
<line x1="365.7" y1="285" x2="365.7" y2="286.8"/>
<line x1="368.4" y1="285" x2="368.4" y2="286.7"/>
<line x1="371.1" y1="285" x2="371.1" y2="286.5"/>
<line x1="373.8" y1="285" x2="373.8" y2="285.8"/>
<line x1="376.5" y1="285" x2="376.5" y2="286.2"/>
<line x1="379.2" y1="285" x2="379.2" y2="286.3"/>
<line x1="381.9" y1="285" x2="381.9" y2="286.6"/>
<line x1="384.6" y1="285" x2="384.6" y2="286.2"/>
<line x1="387.3" y1="285" x2="387.3" y2="286.7"/>
<line x1="390.0" y1="285" x2="390.0" y2="287.3"/>
<line x1="392.7" y1="285" x2="392.7" y2="285.8"/>
<line x1="395.4" y1="285" x2="395.4" y2="286.8"/>
<line x1="398.1" y1="285" x2="398.1" y2="287.0"/>
<line x1="400.8" y1="285" x2="400.8" y2="286.3"/>
<line x1="403.5" y1="285" x2="403.5" y2="286.5"/>
<line x1="406.2" y1="285" x2="406.2" y2="287.5"/>
<line x1="408.9" y1="285" x2="408.9" y2="285.6"/>
<line x1="411.6" y1="285" x2="411.6" y2="286.6"/>
<line x1="414.3" y1="285" x2="414.3" y2="285.9"/>
<line x1="417.0" y1="285" x2="417.0" y2="287.2"/>
<line x1="419.7" y1="285" x2="419.7" y2="287.5"/>
<line x1="422.4" y1="285" x2="422.4" y2="286.7"/>
<line x1="425.1" y1="285" x2="425.1" y2="285.9"/>
<line x1="427.8" y1="285" x2="427.8" y2="286.8"/>
<line x1="430.5" y1="285" x2="430.5" y2="286.8"/>
<line x1="433.2" y1="285" x2="433.2" y2="287.1"/>
<line x1="435.9" y1="285" x2="435.9" y2="286.7"/>
<line x1="438.5" y1="285" x2="438.5" y2="287.0"/>
<line x1="441.2" y1="285" x2="441.2" y2="287.4"/>
<line x1="443.9" y1="285" x2="443.9" y2="286.8"/>
<line x1="446.6" y1="285" x2="446.6" y2="286.6"/>
<line x1="449.3" y1="285" x2="449.3" y2="287.7"/>
<line x1="452.0" y1="285" x2="452.0" y2="286.3"/>
<line x1="454.7" y1="285" x2="454.7" y2="287.2"/>
<line x1="457.4" y1="285" x2="457.4" y2="286.7"/>
<line x1="460.1" y1="285" x2="460.1" y2="287.4"/>
<line x1="462.8" y1="285" x2="462.8" y2="286.1"/>
<line x1="465.5" y1="285" x2="465.5" y2="287.9"/>
<line x1="468.2" y1="285" x2="468.2" y2="286.7"/>
<line x1="470.9" y1="285" x2="470.9" y2="286.1"/>
<line x1="473.6" y1="285" x2="473.6" y2="286.5"/>
<line x1="476.3" y1="285" x2="476.3" y2="286.8"/>
<line x1="479.0" y1="285" x2="479.0" y2="286.6"/>
<line x1="481.7" y1="285" x2="481.7" y2="288.1"/>
<line x1="484.4" y1="285" x2="484.4" y2="288.8"/>
<line x1="487.1" y1="285" x2="487.1" y2="290.1"/>
<line x1="489.8" y1="285" x2="489.8" y2="290.1"/>
<line x1="492.5" y1="285" x2="492.5" y2="290.6"/>
<line x1="495.2" y1="285" x2="495.2" y2="291.2"/>
<line x1="497.9" y1="285" x2="497.9" y2="292.9"/>
<line x1="500.6" y1="285" x2="500.6" y2="293.9"/>
<line x1="503.3" y1="285" x2="503.3" y2="293.7"/>
<line x1="506.0" y1="285" x2="506.0" y2="293.8"/>
<line x1="508.7" y1="285" x2="508.7" y2="295.6"/>
<line x1="511.3" y1="285" x2="511.3" y2="295.4"/>
<line x1="514.0" y1="285" x2="514.0" y2="295.7"/>
<line x1="516.7" y1="285" x2="516.7" y2="296.1"/>
<line x1="519.4" y1="285" x2="519.4" y2="297.9"/>
<line x1="522.1" y1="285" x2="522.1" y2="298.5"/>
<line x1="524.8" y1="285" x2="524.8" y2="298.7"/>
<line x1="527.5" y1="285" x2="527.5" y2="298.9"/>
<line x1="530.2" y1="285" x2="530.2" y2="299.7"/>
<line x1="532.9" y1="285" x2="532.9" y2="299.5"/>
<line x1="535.6" y1="285" x2="535.6" y2="301.6"/>
<line x1="538.3" y1="285" x2="538.3" y2="300.9"/>
<line x1="541.0" y1="285" x2="541.0" y2="302.0"/>
<line x1="543.7" y1="285" x2="543.7" y2="302.9"/>
<line x1="546.4" y1="285" x2="546.4" y2="303.1"/>
<line x1="549.1" y1="285" x2="549.1" y2="302.2"/>
<line x1="551.8" y1="285" x2="551.8" y2="301.7"/>
<line x1="554.5" y1="285" x2="554.5" y2="302.1"/>
<line x1="557.2" y1="285" x2="557.2" y2="301.1"/>
<line x1="559.9" y1="285" x2="559.9" y2="302.4"/>
<line x1="562.6" y1="285" x2="562.6" y2="301.3"/>
<line x1="565.3" y1="285" x2="565.3" y2="302.2"/>
<line x1="568.0" y1="285" x2="568.0" y2="300.9"/>
<line x1="570.7" y1="285" x2="570.7" y2="301.0"/>
<line x1="573.4" y1="285" x2="573.4" y2="300.6"/>
<line x1="576.1" y1="285" x2="576.1" y2="300.6"/>
<line x1="578.8" y1="285" x2="578.8" y2="299.3"/>
<line x1="581.5" y1="285" x2="581.5" y2="298.2"/>
<line x1="584.1" y1="285" x2="584.1" y2="298.9"/>
<line x1="586.8" y1="285" x2="586.8" y2="297.3"/>
<line x1="589.5" y1="285" x2="589.5" y2="296.5"/>
<line x1="592.2" y1="285" x2="592.2" y2="295.9"/>
<line x1="594.9" y1="285" x2="594.9" y2="295.5"/>
<line x1="597.6" y1="285" x2="597.6" y2="295.4"/>
<line x1="600.3" y1="285" x2="600.3" y2="298.0"/>
<line x1="603.0" y1="285" x2="603.0" y2="300.3"/>
<line x1="605.7" y1="285" x2="605.7" y2="301.9"/>
<line x1="608.4" y1="285" x2="608.4" y2="305.3"/>
<line x1="611.1" y1="285" x2="611.1" y2="307.4"/>
<line x1="613.8" y1="285" x2="613.8" y2="308.0"/>
<line x1="616.5" y1="285" x2="616.5" y2="311.8"/>
<line x1="619.2" y1="285" x2="619.2" y2="314.2"/>
<line x1="621.9" y1="285" x2="621.9" y2="315.2"/>
<line x1="624.6" y1="285" x2="624.6" y2="314.7"/>
<line x1="627.3" y1="285" x2="627.3" y2="317.0"/>
<line x1="630.0" y1="285" x2="630.0" y2="317.4"/>
<line x1="632.7" y1="285" x2="632.7" y2="317.1"/>
<line x1="635.4" y1="285" x2="635.4" y2="317.9"/>
<line x1="638.1" y1="285" x2="638.1" y2="320.7"/>
<line x1="640.8" y1="285" x2="640.8" y2="320.9"/>
<line x1="643.5" y1="285" x2="643.5" y2="320.5"/>
<line x1="646.2" y1="285" x2="646.2" y2="320.2"/>
<line x1="648.9" y1="285" x2="648.9" y2="320.3"/>
<line x1="651.6" y1="285" x2="651.6" y2="320.5"/>
<line x1="654.3" y1="285" x2="654.3" y2="321.6"/>
<line x1="656.9" y1="285" x2="656.9" y2="320.7"/>
<line x1="659.6" y1="285" x2="659.6" y2="320.3"/>
<line x1="662.3" y1="285" x2="662.3" y2="321.8"/>
<line x1="665.0" y1="285" x2="665.0" y2="321.6"/>
<line x1="667.7" y1="285" x2="667.7" y2="319.0"/>
<line x1="670.4" y1="285" x2="670.4" y2="319.1"/>
<line x1="673.1" y1="285" x2="673.1" y2="317.2"/>
<line x1="675.8" y1="285" x2="675.8" y2="316.2"/>
<line x1="678.5" y1="285" x2="678.5" y2="314.6"/>
<line x1="681.2" y1="285" x2="681.2" y2="313.7"/>
<line x1="683.9" y1="285" x2="683.9" y2="312.1"/>
<line x1="686.6" y1="285" x2="686.6" y2="310.9"/>
<line x1="689.3" y1="285" x2="689.3" y2="308.2"/>
<line x1="692.0" y1="285" x2="692.0" y2="307.9"/>
<line x1="694.7" y1="285" x2="694.7" y2="306.2"/>
<line x1="697.4" y1="285" x2="697.4" y2="305.3"/>
<line x1="700.1" y1="285" x2="700.1" y2="303.3"/>
<line x1="702.8" y1="285" x2="702.8" y2="303.3"/>
<line x1="705.5" y1="285" x2="705.5" y2="302.7"/>
<line x1="708.2" y1="285" x2="708.2" y2="302.3"/>
<line x1="710.9" y1="285" x2="710.9" y2="302.3"/>
<line x1="713.6" y1="285" x2="713.6" y2="302.2"/>
<line x1="716.3" y1="285" x2="716.3" y2="303.0"/>
<line x1="719.0" y1="285" x2="719.0" y2="302.3"/>
<line x1="721.7" y1="285" x2="721.7" y2="303.2"/>
<line x1="724.4" y1="285" x2="724.4" y2="302.7"/>
<line x1="727.1" y1="285" x2="727.1" y2="303.5"/>
<line x1="729.7" y1="285" x2="729.7" y2="303.6"/>
<line x1="732.4" y1="285" x2="732.4" y2="303.8"/>
<line x1="735.1" y1="285" x2="735.1" y2="304.5"/>
<line x1="737.8" y1="285" x2="737.8" y2="302.9"/>
<line x1="740.5" y1="285" x2="740.5" y2="304.5"/>
<line x1="743.2" y1="285" x2="743.2" y2="303.0"/>
<line x1="745.9" y1="285" x2="745.9" y2="302.3"/>
<line x1="748.6" y1="285" x2="748.6" y2="301.7"/>
<line x1="751.3" y1="285" x2="751.3" y2="301.3"/>
<line x1="754.0" y1="285" x2="754.0" y2="299.5"/>
<line x1="756.7" y1="285" x2="756.7" y2="298.8"/>
<line x1="759.4" y1="285" x2="759.4" y2="299.1"/>
<line x1="762.1" y1="285" x2="762.1" y2="296.5"/>
<line x1="764.8" y1="285" x2="764.8" y2="296.8"/>
<line x1="767.5" y1="285" x2="767.5" y2="296.0"/>
<line x1="770.2" y1="285" x2="770.2" y2="293.9"/>
<line x1="772.9" y1="285" x2="772.9" y2="293.1"/>
<line x1="775.6" y1="285" x2="775.6" y2="291.2"/>
<line x1="778.3" y1="285" x2="778.3" y2="289.7"/>
<line x1="781.0" y1="285" x2="781.0" y2="286.4"/>
<line x1="783.7" y1="285" x2="783.7" y2="285.7"/>
<line x1="786.4" y1="285" x2="786.4" y2="282.7"/>
<line x1="789.1" y1="285" x2="789.1" y2="280.7"/>
<line x1="791.8" y1="285" x2="791.8" y2="279.5"/>
<line x1="794.5" y1="285" x2="794.5" y2="277.7"/>
<line x1="797.2" y1="285" x2="797.2" y2="279.3"/>
<line x1="799.9" y1="285" x2="799.9" y2="279.3"/>
<line x1="802.5" y1="285" x2="802.5" y2="278.9"/>
<line x1="805.2" y1="285" x2="805.2" y2="280.1"/>
<line x1="807.9" y1="285" x2="807.9" y2="279.3"/>
<line x1="810.6" y1="285" x2="810.6" y2="279.7"/>
<line x1="813.3" y1="285" x2="813.3" y2="279.9"/>
<line x1="816.0" y1="285" x2="816.0" y2="280.9"/>
<line x1="818.7" y1="285" x2="818.7" y2="280.8"/>
<line x1="821.4" y1="285" x2="821.4" y2="282.2"/>
<line x1="824.1" y1="285" x2="824.1" y2="283.2"/>
<line x1="826.8" y1="285" x2="826.8" y2="284.4"/>
<line x1="829.5" y1="285" x2="829.5" y2="286.0"/>
<line x1="832.2" y1="285" x2="832.2" y2="285.9"/>
<line x1="834.9" y1="285" x2="834.9" y2="288.0"/>
<line x1="837.6" y1="285" x2="837.6" y2="288.1"/>
<line x1="840.3" y1="285" x2="840.3" y2="289.3"/>
<line x1="843.0" y1="285" x2="843.0" y2="289.8"/>
<line x1="845.7" y1="285" x2="845.7" y2="291.0"/>
<line x1="848.4" y1="285" x2="848.4" y2="292.1"/>
<line x1="851.1" y1="285" x2="851.1" y2="291.6"/>
<line x1="853.8" y1="285" x2="853.8" y2="292.0"/>
<line x1="856.5" y1="285" x2="856.5" y2="291.2"/>
<line x1="859.2" y1="285" x2="859.2" y2="291.3"/>
<line x1="861.9" y1="285" x2="861.9" y2="291.3"/>
<line x1="864.6" y1="285" x2="864.6" y2="292.0"/>
<line x1="867.3" y1="285" x2="867.3" y2="292.3"/>
<line x1="870.0" y1="285" x2="870.0" y2="292.7"/>
<line x1="872.7" y1="285" x2="872.7" y2="291.3"/>
<line x1="875.3" y1="285" x2="875.3" y2="292.8"/>
<line x1="878.0" y1="285" x2="878.0" y2="293.2"/>
<line x1="880.7" y1="285" x2="880.7" y2="292.7"/>
<line x1="883.4" y1="285" x2="883.4" y2="291.8"/>
<line x1="886.1" y1="285" x2="886.1" y2="292.4"/>
<line x1="888.8" y1="285" x2="888.8" y2="292.0"/>
<line x1="891.5" y1="285" x2="891.5" y2="292.4"/>
<line x1="894.2" y1="285" x2="894.2" y2="294.0"/>
<line x1="896.9" y1="285" x2="896.9" y2="293.5"/>
<line x1="899.6" y1="285" x2="899.6" y2="293.7"/>
<line x1="902.3" y1="285" x2="902.3" y2="294.1"/>
<line x1="905.0" y1="285" x2="905.0" y2="294.5"/>
<line x1="907.7" y1="285" x2="907.7" y2="294.0"/>
<line x1="910.4" y1="285" x2="910.4" y2="294.1"/>
<line x1="913.1" y1="285" x2="913.1" y2="294.3"/>
<line x1="915.8" y1="285" x2="915.8" y2="294.5"/>
<line x1="918.5" y1="285" x2="918.5" y2="294.5"/>
<line x1="921.2" y1="285" x2="921.2" y2="294.7"/>
<line x1="923.9" y1="285" x2="923.9" y2="293.9"/>
<line x1="926.6" y1="285" x2="926.6" y2="295.0"/>
<line x1="929.3" y1="285" x2="929.3" y2="294.7"/>
<line x1="932.0" y1="285" x2="932.0" y2="295.4"/>
<line x1="934.7" y1="285" x2="934.7" y2="294.2"/>
<line x1="937.4" y1="285" x2="937.4" y2="295.5"/>
<line x1="940.1" y1="285" x2="940.1" y2="296.6"/>
<line x1="942.8" y1="285" x2="942.8" y2="299.4"/>
<line x1="945.5" y1="285" x2="945.5" y2="301.1"/>
<line x1="948.1" y1="285" x2="948.1" y2="301.9"/>
<line x1="950.8" y1="285" x2="950.8" y2="302.7"/>
<line x1="953.5" y1="285" x2="953.5" y2="304.9"/>
<line x1="956.2" y1="285" x2="956.2" y2="306.2"/>
<line x1="958.9" y1="285" x2="958.9" y2="306.8"/>
<line x1="961.6" y1="285" x2="961.6" y2="307.2"/>
<line x1="964.3" y1="285" x2="964.3" y2="308.3"/>
<line x1="967.0" y1="285" x2="967.0" y2="309.5"/>
<line x1="969.7" y1="285" x2="969.7" y2="310.3"/>
<line x1="972.4" y1="285" x2="972.4" y2="311.2"/>
<line x1="975.1" y1="285" x2="975.1" y2="310.6"/>
<line x1="977.8" y1="285" x2="977.8" y2="310.1"/>
<line x1="980.5" y1="285" x2="980.5" y2="307.3"/>
<line x1="983.2" y1="285" x2="983.2" y2="307.3"/>
<line x1="985.9" y1="285" x2="985.9" y2="305.1"/>
<line x1="988.6" y1="285" x2="988.6" y2="304.2"/>
<line x1="991.3" y1="285" x2="991.3" y2="304.6"/>
<line x1="994.0" y1="285" x2="994.0" y2="303.0"/>
<line x1="996.7" y1="285" x2="996.7" y2="301.9"/>
<line x1="999.4" y1="285" x2="999.4" y2="298.7"/>
<line x1="1002.1" y1="285" x2="1002.1" y2="295.6"/>
<line x1="1004.8" y1="285" x2="1004.8" y2="294.1"/>
<line x1="1007.5" y1="285" x2="1007.5" y2="292.2"/>
<line x1="1010.2" y1="285" x2="1010.2" y2="290.6"/>
<line x1="1012.9" y1="285" x2="1012.9" y2="288.4"/>
<line x1="1015.6" y1="285" x2="1015.6" y2="285.2"/>
<line x1="1018.3" y1="285" x2="1018.3" y2="282.7"/>
<line x1="1020.9" y1="285" x2="1020.9" y2="279.7"/>
<line x1="1023.6" y1="285" x2="1023.6" y2="278.4"/>
<line x1="1026.3" y1="285" x2="1026.3" y2="275.1"/>
<line x1="1029.0" y1="285" x2="1029.0" y2="272.6"/>
<line x1="1031.7" y1="285" x2="1031.7" y2="269.9"/>
<line x1="1034.4" y1="285" x2="1034.4" y2="267.5"/>
<line x1="1037.1" y1="285" x2="1037.1" y2="266.4"/>
<line x1="1039.8" y1="285" x2="1039.8" y2="262.9"/>
<line x1="1042.5" y1="285" x2="1042.5" y2="263.9"/>
<line x1="1045.2" y1="285" x2="1045.2" y2="261.5"/>
<line x1="1047.9" y1="285" x2="1047.9" y2="262.4"/>
<line x1="1050.6" y1="285" x2="1050.6" y2="260.3"/>
<line x1="1053.3" y1="285" x2="1053.3" y2="262.6"/>
<line x1="1056.0" y1="285" x2="1056.0" y2="266.9"/></g>
  <polyline points="328.0,285.8 330.7,285.8 333.4,285.9 336.1,286.2 338.8,286.3 341.5,286.3 344.2,286.4 346.9,286.5 349.6,286.4 352.3,286.4 355.0,286.2 357.7,286.3 360.4,286.1 363.1,286.1 365.7,286.3 368.4,286.4 371.1,286.4 373.8,286.3 376.5,286.2 379.2,286.2 381.9,286.3 384.6,286.3 387.3,286.4 390.0,286.6 392.7,286.4 395.4,286.5 398.1,286.6 400.8,286.5 403.5,286.5 406.2,286.8 408.9,286.5 411.6,286.5 414.3,286.4 417.0,286.6 419.7,286.8 422.4,286.8 425.1,286.5 427.8,286.6 430.5,286.6 433.2,286.8 435.9,286.8 438.5,286.8 441.2,287.0 443.9,286.9 446.6,286.9 449.3,287.1 452.0,286.9 454.7,287.0 457.4,286.9 460.1,287.0 462.8,286.8 465.5,287.1 468.2,287.0 470.9,286.7 473.6,286.7 476.3,286.7 479.0,286.7 481.7,287.0 484.4,287.5 487.1,288.1 489.8,288.6 492.5,289.1 495.2,289.6 497.9,290.5 500.6,291.3 503.3,291.9 506.0,292.4 508.7,293.2 511.3,293.7 514.0,294.2 516.7,294.7 519.4,295.5 522.1,296.3 524.8,296.9 527.5,297.4 530.2,298.0 532.9,298.4 535.6,299.2 538.3,299.6 541.0,300.2 543.7,300.9 546.4,301.4 549.1,301.6 551.8,301.6 554.5,301.8 557.2,301.6 559.9,301.8 562.6,301.7 565.3,301.8 568.0,301.6 570.7,301.4 573.4,301.2 576.1,301.1 578.8,300.6 581.5,300.0 584.1,299.8 586.8,299.2 589.5,298.5 592.2,297.8 594.9,297.3 597.6,296.8 600.3,297.1 603.0,297.9 605.7,298.9 608.4,300.5 611.1,302.2 613.8,303.7 616.5,305.7 619.2,307.8 621.9,309.6 624.6,310.9 627.3,312.4 630.0,313.7 632.7,314.5 635.4,315.4 638.1,316.7 640.8,317.8 643.5,318.4 646.2,318.9 648.9,319.2 651.6,319.5 654.3,320.0 656.9,320.2 659.6,320.2 662.3,320.6 665.0,320.9 667.7,320.4 670.4,320.1 673.1,319.3 675.8,318.5 678.5,317.5 681.2,316.6 683.9,315.5 686.6,314.3 689.3,312.8 692.0,311.6 694.7,310.2 697.4,309.0 700.1,307.6 702.8,306.5 705.5,305.6 708.2,304.7 710.9,304.1 713.6,303.7 716.3,303.5 719.0,303.2 721.7,303.2 724.4,303.1 727.1,303.2 729.7,303.3 732.4,303.4 735.1,303.7 737.8,303.5 740.5,303.8 743.2,303.6 745.9,303.3 748.6,302.9 751.3,302.5 754.0,301.7 756.7,301.0 759.4,300.5 762.1,299.5 764.8,298.9 767.5,298.1 770.2,297.1 772.9,296.1 775.6,294.9 778.3,293.6 781.0,291.8 783.7,290.3 786.4,288.4 789.1,286.5 791.8,284.7 794.5,283.0 797.2,282.0 799.9,281.3 802.5,280.7 805.2,280.6 807.9,280.2 810.6,280.1 813.3,280.1 816.0,280.3 818.7,280.4 821.4,280.9 824.1,281.4 826.8,282.2 829.5,283.1 832.2,283.8 834.9,284.9 837.6,285.7 840.3,286.6 843.0,287.4 845.7,288.3 848.4,289.2 851.1,289.8 853.8,290.4 856.5,290.6 859.2,290.7 861.9,290.9 864.6,291.2 867.3,291.5 870.0,291.8 872.7,291.6 875.3,291.9 878.0,292.3 880.7,292.4 883.4,292.2 886.1,292.3 888.8,292.2 891.5,292.3 894.2,292.7 896.9,292.9 899.6,293.1 902.3,293.4 905.0,293.6 907.7,293.7 910.4,293.8 913.1,293.9 915.8,294.1 918.5,294.2 921.2,294.3 923.9,294.2 926.6,294.4 929.3,294.5 932.0,294.7 934.7,294.6 937.4,294.8 940.1,295.3 942.8,296.3 945.5,297.5 948.1,298.6 950.8,299.6 953.5,300.9 956.2,302.2 958.9,303.4 961.6,304.3 964.3,305.3 967.0,306.4 969.7,307.4 972.4,308.3 975.1,308.9 977.8,309.2 980.5,308.7 983.2,308.3 985.9,307.5 988.6,306.7 991.3,306.2 994.0,305.4 996.7,304.5 999.4,303.1 1002.1,301.2 1004.8,299.4 1007.5,297.6 1010.2,295.9 1012.9,294.0 1015.6,291.8 1018.3,289.5 1020.9,287.1 1023.6,284.9 1026.3,282.4 1029.0,280.0 1031.7,277.5 1034.4,275.0 1037.1,272.8 1039.8,270.3 1042.5,268.7 1045.2,266.9 1047.9,265.8 1050.6,264.4 1053.3,264.0 1056.0,264.7" fill="none" stroke="#b81c1c" stroke-width="1.1"/>
  <line x1="328" y1="327.5" x2="1243" y2="327.5" stroke="#c8c8c8" stroke-width="2"/>
  <line x1="328" y1="343.5" x2="1241" y2="343.5" stroke="#aaa" stroke-width="0.8" stroke-dasharray="2,2"/>
  <line x1="328" y1="385.5" x2="1241" y2="385.5" stroke="#aaa" stroke-width="0.8" stroke-dasharray="2,2"/>
  <polyline points="328.0,351.2 330.7,354.8 333.4,358.8 336.1,363.7 338.8,370.4 341.5,373.5 344.2,372.7 346.9,369.3 349.6,363.9 352.3,359.2 355.0,354.1 357.7,350.2 360.4,353.9 363.1,359.5 365.7,368.3 368.4,377.2 371.1,382.6 373.8,383.7 376.5,383.7 379.2,382.3 381.9,379.0 384.6,376.4 387.3,377.0 390.0,378.0 392.7,381.2 395.4,383.2 398.1,381.1 400.8,378.1 403.5,374.5 406.2,370.1 408.9,365.8 411.6,360.7 414.3,357.3 417.0,352.9 419.7,352.0 422.4,352.4 425.1,353.1 427.8,353.4 430.5,354.1 433.2,354.8 435.9,355.4 438.5,357.2 441.2,359.4 443.9,362.0 446.6,366.5 449.3,370.1 452.0,370.9 454.7,368.2 457.4,365.1 460.1,361.9 462.8,357.9 465.5,353.8 468.2,349.6 470.9,345.8 473.6,343.0 476.3,343.5 479.0,351.9 481.7,363.7 484.4,377.7 487.1,386.6 489.8,390.4 492.5,392.2 495.2,393.5 497.9,391.6 500.6,388.0 503.3,383.7 506.0,378.8 508.7,372.1 511.3,367.7 514.0,363.7 516.7,360.1 519.4,356.0 522.1,354.0 524.8,355.1 527.5,356.7 530.2,358.4 532.9,361.2 535.6,364.0 538.3,367.4 541.0,372.3 543.7,377.5 546.4,377.0 549.1,371.5 551.8,365.5 554.5,359.2 557.2,354.5 559.9,350.1 562.6,345.5 565.3,341.0 568.0,340.7 570.7,343.2 573.4,346.4 576.1,350.5 578.8,356.8 581.5,366.0 584.1,375.3 586.8,383.9 589.5,389.3 592.2,392.7 594.9,394.6 597.6,395.1 600.3,395.3 603.0,394.1 605.7,391.3 608.4,388.4 611.1,385.4 613.8,383.2 616.5,381.2 619.2,381.2 621.9,381.6 624.6,382.5 627.3,383.1 630.0,383.8 632.7,382.2 635.4,376.9 638.1,370.3 640.8,366.0 643.5,366.1 646.2,367.3 648.9,370.7 651.6,374.0 654.3,378.1 656.9,381.4 659.6,385.2 662.3,386.6 665.0,384.5 667.7,380.3 670.4,375.7 673.1,370.3 675.8,365.9 678.5,360.5 681.2,356.0 683.9,350.9 686.6,345.8 689.3,345.1 692.0,345.8 694.7,348.1 697.4,351.7 700.1,355.8 702.8,359.9 705.5,364.1 708.2,369.4 710.9,374.8 713.6,379.1 716.3,381.4 719.0,378.6 721.7,371.9 724.4,365.5 727.1,358.1 729.7,356.9 732.4,360.6 735.1,364.2 737.8,369.4 740.5,374.9 743.2,380.4 745.9,385.1 748.6,384.9 751.3,380.1 754.0,372.3 756.7,364.8 759.4,356.3 762.1,351.6 764.8,351.5 767.5,354.2 770.2,358.2 772.9,361.9 775.6,361.1 778.3,358.0 781.0,352.6 783.7,348.5 786.4,343.7 789.1,345.1 791.8,352.3 794.5,360.3 797.2,370.3 799.9,382.3 802.5,388.6 805.2,391.0 807.9,391.4 810.6,391.8 813.3,392.0 816.0,389.8 818.7,386.4 821.4,381.9 824.1,376.7 826.8,372.0 829.5,366.5 832.2,361.1 834.9,355.6 837.6,358.1 840.3,363.1 843.0,371.4 845.7,377.8 848.4,379.2 851.1,379.9 853.8,377.5 856.5,375.9 859.2,373.5 861.9,370.3 864.6,365.3 867.3,361.0 870.0,356.1 872.7,352.7 875.3,349.1 878.0,348.3 880.7,348.9 883.4,350.4 886.1,354.1 888.8,358.8 891.5,364.8 894.2,370.3 896.9,373.5 899.6,373.8 902.3,373.9 905.0,372.7 907.7,370.4 910.4,369.4 913.1,367.7 915.8,368.1 918.5,368.8 921.2,370.4 923.9,373.0 926.6,374.5 929.3,376.0 932.0,378.5 934.7,380.8 937.4,384.2 940.1,386.0 942.8,389.7 945.5,391.2 948.1,393.6 950.8,394.9 953.5,395.1 956.2,396.0 958.9,396.5 961.6,396.5 964.3,395.9 967.0,395.3 969.7,395.5 972.4,390.7 975.1,382.8 977.8,372.2 980.5,361.7 983.2,356.0 985.9,355.2 988.6,359.4 991.3,364.1 994.0,371.0 996.7,373.4 999.4,374.5 1002.1,373.0 1004.8,370.5 1007.5,364.6 1010.2,358.3 1012.9,349.9 1015.6,341.4 1018.3,337.2 1020.9,335.4 1023.6,333.1 1026.3,332.2 1029.0,330.6 1031.7,330.2 1034.4,331.4 1037.1,332.5 1039.8,332.7 1042.5,336.5 1045.2,342.4 1047.9,350.2 1050.6,358.9 1053.3,371.0 1056.0,382.0" fill="none" stroke="#b02020" stroke-width="1" stroke-dasharray="1.5,1.5"/>
  <polyline points="328.0,351.2 330.7,358.3 333.4,362.8 336.1,368.6 338.8,377.1 341.5,376.7 344.2,371.8 346.9,366.0 349.6,358.5 352.3,354.6 355.0,349.0 357.7,346.3 360.4,357.5 363.1,365.1 365.7,377.1 368.4,386.1 371.1,388.1 373.8,384.8 376.5,383.6 379.2,380.9 381.9,375.7 384.6,373.8 387.3,377.5 390.0,378.9 392.7,384.4 395.4,385.2 398.1,379.0 400.8,375.1 403.5,370.9 406.2,365.7 408.9,361.6 411.6,355.6 414.3,353.8 417.0,348.6 419.7,351.1 422.4,352.8 425.1,353.7 427.8,353.6 430.5,354.9 433.2,355.4 435.9,356.0 438.5,358.9 441.2,361.7 443.9,364.5 446.6,371.0 449.3,373.8 452.0,371.7 454.7,365.6 457.4,362.0 460.1,358.7 462.8,354.0 465.5,349.7 468.2,345.3 470.9,342.1 473.6,340.1 476.3,344.0 479.0,360.3 481.7,375.5 484.4,391.8 487.1,395.4 489.8,394.3 492.5,393.9 495.2,394.9 497.9,389.6 500.6,384.4 503.3,379.4 506.0,373.9 508.7,365.4 511.3,363.3 514.0,359.7 516.7,356.4 519.4,352.0 522.1,352.1 524.8,356.1 527.5,358.3 530.2,360.1 532.9,363.9 535.6,366.9 538.3,370.8 541.0,377.1 543.7,382.7 546.4,376.6 549.1,366.0 551.8,359.5 554.5,353.0 557.2,349.8 559.9,345.8 562.6,340.8 565.3,336.4 568.0,340.4 570.7,345.7 573.4,349.6 576.1,354.7 578.8,363.1 581.5,375.1 584.1,384.7 586.8,392.6 589.5,394.6 592.2,396.1 594.9,396.5 597.6,395.7 600.3,395.6 603.0,392.9 605.7,388.5 608.4,385.5 611.1,382.4 613.8,381.0 616.5,379.3 619.2,381.2 621.9,381.9 624.6,383.5 627.3,383.6 630.0,384.5 632.7,380.6 635.4,371.6 638.1,363.7 640.8,361.6 643.5,366.3 646.2,368.5 648.9,374.0 651.6,377.4 654.3,382.2 656.9,384.7 659.6,389.0 662.3,388.1 665.0,382.5 667.7,376.1 670.4,371.1 673.1,365.0 675.8,361.4 678.5,355.1 681.2,351.6 683.9,345.8 686.6,340.8 689.3,344.3 692.0,346.5 694.7,350.3 697.4,355.4 700.1,359.8 702.8,364.0 705.5,368.4 708.2,374.6 710.9,380.2 713.6,383.4 716.3,383.7 719.0,375.8 721.7,365.2 724.4,359.0 727.1,350.8 729.7,355.7 732.4,364.2 735.1,367.8 737.8,374.5 740.5,380.4 743.2,386.0 745.9,389.7 748.6,384.8 751.3,375.2 754.0,364.5 756.7,357.4 759.4,347.7 762.1,347.0 764.8,351.3 767.5,357.0 770.2,362.2 772.9,365.6 775.6,360.4 778.3,354.9 781.0,347.2 783.7,344.3 786.4,338.9 789.1,346.5 791.8,359.4 794.5,368.3 797.2,380.4 799.9,394.2 802.5,394.9 805.2,393.5 807.9,391.8 810.6,392.2 813.3,392.2 816.0,387.7 818.7,383.0 821.4,377.4 824.1,371.6 826.8,367.3 829.5,360.9 832.2,355.7 834.9,350.1 837.6,360.7 840.3,368.0 843.0,379.7 845.7,384.2 848.4,380.7 851.1,380.5 853.8,375.2 856.5,374.4 859.2,371.1 861.9,367.1 864.6,360.2 867.3,356.7 870.0,351.1 872.7,349.3 875.3,345.4 878.0,347.5 880.7,349.6 883.4,351.9 886.1,357.9 888.8,363.5 891.5,370.7 894.2,375.9 896.9,376.6 899.6,374.1 902.3,374.1 905.0,371.5 907.7,368.1 910.4,368.4 913.1,366.0 915.8,368.5 918.5,369.6 921.2,371.9 923.9,375.7 926.6,376.0 929.3,377.4 932.0,380.9 934.7,383.1 937.4,387.7 940.1,387.8 942.8,393.3 945.5,392.7 948.1,396.1 950.8,396.1 953.5,395.4 956.2,396.9 958.9,397.0 961.6,396.6 964.3,395.3 967.0,394.8 969.7,395.7 972.4,385.9 975.1,374.9 977.8,361.5 980.5,351.3 983.2,350.3 985.9,354.5 988.6,363.5 991.3,368.9 994.0,378.0 996.7,375.8 999.4,375.6 1002.1,371.4 1004.8,368.1 1007.5,358.8 1010.2,352.0 1012.9,341.6 1015.6,332.8 1018.3,332.9 1020.9,333.7 1023.6,330.8 1026.3,331.2 1029.0,329.1 1031.7,329.7 1034.4,332.6 1037.1,333.5 1039.8,333.0 1042.5,340.2 1045.2,348.3 1047.9,358.1 1050.6,367.6 1053.3,383.1 1056.0,393.1" fill="none" stroke="#389488" stroke-width="1"/>
  <line x1="328" y1="399.5" x2="1243" y2="399.5" stroke="#c8c8c8" stroke-width="1.3"/>
  <line x1="1242.5" y1="83" x2="1242.5" y2="400" stroke="#c8c8c8" stroke-width="1.3"/>
</svg>


<!-- chart labels -->
<div class="ch">
<svg class="a" style="left:331px;top:87px" width="9" height="6" viewBox="0 0 9 6"><path d="M0 0 H8 L4 5 Z" fill="#f0f0f0"/></svg>
<div class="t" style="left:342px;top:86px;letter-spacing:-0.45px">BTCUSD.fl,H1</div><div class="t" style="left:404px;top:86px;font-size:9.75px">20163.6 20482.8 19753.4 19790.3</div>
<div class="t" style="left:331px;top:260px">MACD(12,26,9) 538.33 609.26</div>
<div class="t" style="left:331px;top:331px">Stoch(5,3,3) 6.9743 34.2819</div>
<div class="t" style="left:1245px;top:95px">30200.0</div>
<div class="t" style="left:1245px;top:139px">25032.5</div>
<div class="a" style="left:1242px;top:181px;width:38px;height:14px;background:#fff"></div>
<div class="t" style="left:1245px;top:183px;color:#000">19790.3</div>
<div class="t" style="left:1245px;top:226px">14538.5</div>
<div class="t" style="left:1244px;top:258px">798.43</div>
<div class="a" style="left:1242px;top:279px;width:7px;height:12px;background:#e82020;border-radius:3px;box-shadow:0 0 2px #e02020"></div>
<div class="t" style="left:1243px;top:280px">0.00</div>
<div class="t" style="left:1244px;top:315px">-1205.84</div>
<div class="t" style="left:1244px;top:331px">100</div>
<div class="t" style="left:1244px;top:339px">80</div>
<div class="t" style="left:1244px;top:381px">20</div>
<div class="t" style="left:1244px;top:389px">0</div>
<div class="t" style="left:328px;top:404px">8 Jun 2022</div>
<div class="t" style="left:414px;top:404px">10 Jun 05:00</div>
<div class="t" style="left:500px;top:404px">11 Jun 13:00</div>
<div class="t" style="left:586px;top:404px">12 Jun 21:05</div>
<div class="t" style="left:672px;top:404px">14 Jun 05:00</div>
<div class="t" style="left:758px;top:404px">15 Jun 13:00</div>
<div class="t" style="left:845px;top:404px">16 Jun 21:05</div>
<div class="t" style="left:931px;top:404px">18 Jun 05:00</div>
<div class="t" style="left:1018px;top:404px">19 Jun 13:00</div>
<svg class="a" style="left:1226px;top:298px" width="14" height="24" viewBox="0 0 14 24"><path d="M3 2 L11 12 L3 22" fill="none" stroke="#909090" stroke-width="2.5"/></svg>
</div>

<!-- chart tabs -->
<div class="a" style="left:325px;top:419px;width:955px;height:21px;background:#f0f0f0"></div>
<div class="a" style="left:329px;top:419px;width:100px;height:21px;background:#fff;border:1px solid #8a8a8a;border-top:none;border-bottom:2px solid #707070"></div>
<div class="t" style="left:341px;top:423px;font-size:12.5px;color:#222;letter-spacing:-0.35px">BTCUSD.fl,H1</div>
<div class="t" style="left:440px;top:423px;font-size:12.5px;color:#888;letter-spacing:-0.25px">AUDUSD.fl,M1</div>
<div class="sep" style="left:534px;top:422px;height:16px"></div>
<div class="t" style="left:545px;top:423px;font-size:12.5px;color:#888;letter-spacing:-0.25px">ETHUSD.fl,H1</div>
<div class="sep" style="left:634px;top:422px;height:16px"></div>
<div class="t" style="left:1259px;top:423px;font-size:11px;color:#999">‹</div>

<!-- terminal -->
<div class="a" style="left:0;top:441px;width:1280px;height:167px;background:#f4f4f4"></div>
<div class="a" style="left:0;top:446px;width:12px;height:162px;background:#cfdbe7"></div>
<div class="term">
<div class="a" style="left:12px;top:446px;width:1258px;height:20px;background:#fff;border-bottom:1px solid #e6e6e6"></div>
<div class="t" style="left:17px;top:450px;font-size:12px">订单</div>
<div class="t" style="left:48px;top:451px;font-size:9px;color:#bbb">/</div>
<div class="t rt" style="left:123.0px;width:185.5px;top:450px;font-size:12px">时间</div>
<div class="a" style="left:123px;top:446px;width:1px;height:20px;background:#e4e4e4"></div>
<div class="t rt" style="left:311.5px;width:83.5px;top:450px;font-size:12px">类型</div>
<div class="a" style="left:312px;top:446px;width:1px;height:20px;background:#e4e4e4"></div>
<div class="t rt" style="left:398.0px;width:65.0px;top:450px;font-size:12px">手数</div>
<div class="a" style="left:398px;top:446px;width:1px;height:20px;background:#e4e4e4"></div>
<div class="t rt" style="left:466.0px;width:82.0px;top:450px;font-size:12px">交易品种</div>
<div class="a" style="left:466px;top:446px;width:1px;height:20px;background:#e4e4e4"></div>
<div class="t rt" style="left:551.0px;width:84.0px;top:450px;font-size:12px">价格</div>
<div class="a" style="left:551px;top:446px;width:1px;height:20px;background:#e4e4e4"></div>
<div class="t rt" style="left:638.0px;width:83.0px;top:450px;font-size:12px">止损</div>
<div class="a" style="left:638px;top:446px;width:1px;height:20px;background:#e4e4e4"></div>
<div class="t rt" style="left:724.0px;width:82.6px;top:450px;font-size:12px">止盈</div>
<div class="a" style="left:724px;top:446px;width:1px;height:20px;background:#e4e4e4"></div>
<div class="t rt" style="left:809.6px;width:185.4px;top:450px;font-size:12px">时间</div>
<div class="a" style="left:810px;top:446px;width:1px;height:20px;background:#e4e4e4"></div>
<div class="t rt" style="left:998.0px;width:83.0px;top:450px;font-size:12px">价格</div>
<div class="a" style="left:998px;top:446px;width:1px;height:20px;background:#e4e4e4"></div>
<div class="t rt" style="left:1084.0px;width:83.0px;top:450px;font-size:12px">库存费</div>
<div class="a" style="left:1084px;top:446px;width:1px;height:20px;background:#e4e4e4"></div>
<div class="t rt" style="left:1170.0px;width:96.6px;top:450px;font-size:12px">获利</div>
<div class="a" style="left:1170px;top:446px;width:1px;height:20px;background:#e4e4e4"></div>
<div class="a" style="left:1269px;top:446px;width:1px;height:20px;background:#e4e4e4"></div>
<div class="a" style="left:12px;top:467px;width:1258px;height:20px;background:#ffffff"></div>
<div class="t" style="left:34px;top:471px">33940855</div>
<div class="a" style="left:123px;top:467px;width:1px;height:20px;background:#dcdcdc"></div>
<div class="t rt" style="left:123.0px;width:185.5px;top:471px">2022.06.07 12:01:37</div>
<div class="a" style="left:312px;top:467px;width:1px;height:20px;background:#dcdcdc"></div>
<div class="t rt" style="left:311.5px;width:83.5px;top:471px">buy</div>
<div class="a" style="left:398px;top:467px;width:1px;height:20px;background:#dcdcdc"></div>
<div class="t rt" style="left:398.0px;width:65.0px;top:471px">1.00</div>
<div class="a" style="left:466px;top:467px;width:1px;height:20px;background:#dcdcdc"></div>
<div class="t rt" style="left:466.0px;width:82.0px;top:471px">btcusd.fl</div>
<div class="a" style="left:551px;top:467px;width:1px;height:20px;background:#dcdcdc"></div>
<div class="t rt" style="left:551.0px;width:84.0px;top:471px">29301.4</div>
<div class="a" style="left:638px;top:467px;width:1px;height:20px;background:#dcdcdc"></div>
<div class="t rt" style="left:638.0px;width:83.0px;top:471px">0.0</div>
<div class="a" style="left:724px;top:467px;width:1px;height:20px;background:#dcdcdc"></div>
<div class="t rt" style="left:724.0px;width:82.6px;top:471px">0.0</div>
<div class="a" style="left:810px;top:467px;width:1px;height:20px;background:#dcdcdc"></div>
<div class="t rt" style="left:809.6px;width:185.4px;top:471px">2022.06.07 12:12:04</div>
<div class="a" style="left:998px;top:467px;width:1px;height:20px;background:#dcdcdc"></div>
<div class="t rt" style="left:998.0px;width:83.0px;top:471px">25786.9</div>
<div class="a" style="left:1084px;top:467px;width:1px;height:20px;background:#dcdcdc"></div>
<div class="t rt" style="left:1084.0px;width:83.0px;top:471px">0.00</div>
<div class="a" style="left:1170px;top:467px;width:1px;height:20px;background:#dcdcdc"></div>
<div class="t rt" style="left:1170.0px;width:96.6px;top:471px">-17 572.50</div>
<div class="a" style="left:1269px;top:467px;width:1px;height:20px;background:#dcdcdc"></div>
<div class="a" style="left:12px;top:487px;width:1258px;height:20px;background:#ebebeb"></div>
<div class="t" style="left:34px;top:491px">33940856</div>
<div class="a" style="left:123px;top:487px;width:1px;height:20px;background:#dcdcdc"></div>
<div class="t rt" style="left:123.0px;width:185.5px;top:491px">2022.06.07 12:01:37</div>
<div class="a" style="left:312px;top:487px;width:1px;height:20px;background:#dcdcdc"></div>
<div class="t rt" style="left:311.5px;width:83.5px;top:491px">buy</div>
<div class="a" style="left:398px;top:487px;width:1px;height:20px;background:#dcdcdc"></div>
<div class="t rt" style="left:398.0px;width:65.0px;top:491px">1.00</div>
<div class="a" style="left:466px;top:487px;width:1px;height:20px;background:#dcdcdc"></div>
<div class="t rt" style="left:466.0px;width:82.0px;top:491px">btcusd.fl</div>
<div class="a" style="left:551px;top:487px;width:1px;height:20px;background:#dcdcdc"></div>
<div class="t rt" style="left:551.0px;width:84.0px;top:491px">29301.4</div>
<div class="a" style="left:638px;top:487px;width:1px;height:20px;background:#dcdcdc"></div>
<div class="t rt" style="left:638.0px;width:83.0px;top:491px">0.0</div>
<div class="a" style="left:724px;top:487px;width:1px;height:20px;background:#dcdcdc"></div>
<div class="t rt" style="left:724.0px;width:82.6px;top:491px">0.0</div>
<div class="a" style="left:810px;top:487px;width:1px;height:20px;background:#dcdcdc"></div>
<div class="t rt" style="left:809.6px;width:185.4px;top:491px">2022.06.07 12:12:04</div>
<div class="a" style="left:998px;top:487px;width:1px;height:20px;background:#dcdcdc"></div>
<div class="t rt" style="left:998.0px;width:83.0px;top:491px">25784.2</div>
<div class="a" style="left:1084px;top:487px;width:1px;height:20px;background:#dcdcdc"></div>
<div class="t rt" style="left:1084.0px;width:83.0px;top:491px">0.00</div>
<div class="a" style="left:1170px;top:487px;width:1px;height:20px;background:#dcdcdc"></div>
<div class="t rt" style="left:1170.0px;width:96.6px;top:491px">-17 586.00</div>
<div class="a" style="left:1269px;top:487px;width:1px;height:20px;background:#dcdcdc"></div>
<div class="a" style="left:12px;top:507px;width:1258px;height:20px;background:#ffffff"></div>
<div class="t" style="left:34px;top:511px">33976067</div>
<div class="a" style="left:123px;top:507px;width:1px;height:20px;background:#dcdcdc"></div>
<div class="t rt" style="left:123.0px;width:185.5px;top:511px">2022.06.10 02:55:12</div>
<div class="a" style="left:312px;top:507px;width:1px;height:20px;background:#dcdcdc"></div>
<div class="t rt" style="left:311.5px;width:83.5px;top:511px">balance</div>
<div class="a" style="left:398px;top:507px;width:1px;height:20px;background:#dcdcdc"></div>
<div class="t rt" style="left:1084.0px;width:83.0px;top:511px">CRM_Deposit</div>
<div class="a" style="left:1170px;top:507px;width:1px;height:20px;background:#dcdcdc"></div>
<div class="t rt" style="left:1170.0px;width:96.6px;top:511px">7 912.94</div>
<div class="a" style="left:1269px;top:507px;width:1px;height:20px;background:#dcdcdc"></div>
<div class="a" style="left:12px;top:527px;width:1258px;height:20px;background:#ebebeb"></div>
<div class="t" style="left:34px;top:531px">34023409</div>
<div class="a" style="left:123px;top:527px;width:1px;height:20px;background:#dcdcdc"></div>
<div class="t rt" style="left:123.0px;width:185.5px;top:531px">2022.06.15 11:53:08</div>
<div class="a" style="left:312px;top:527px;width:1px;height:20px;background:#dcdcdc"></div>
<div class="t rt" style="left:311.5px;width:83.5px;top:531px">balance</div>
<div class="a" style="left:398px;top:527px;width:1px;height:20px;background:#dcdcdc"></div>
<div class="t rt" style="left:1084.0px;width:83.0px;top:531px">CRM_Deposit</div>
<div class="a" style="left:1170px;top:527px;width:1px;height:20px;background:#dcdcdc"></div>
<div class="t rt" style="left:1170.0px;width:96.6px;top:531px">1 326.00</div>
<div class="a" style="left:1269px;top:527px;width:1px;height:20px;background:#dcdcdc"></div>
<div class="a" style="left:12px;top:547px;width:1258px;height:20px;background:#ffffff"></div>
<div class="t" style="left:34px;top:551px">34056521</div>
<div class="a" style="left:123px;top:547px;width:1px;height:20px;background:#dcdcdc"></div>
<div class="t rt" style="left:123.0px;width:185.5px;top:551px">2022.06.17 14:22:16</div>
<div class="a" style="left:312px;top:547px;width:1px;height:20px;background:#dcdcdc"></div>
<div class="t rt" style="left:311.5px;width:83.5px;top:551px">buy</div>
<div class="a" style="left:398px;top:547px;width:1px;height:20px;background:#dcdcdc"></div>
<div class="t rt" style="left:398.0px;width:65.0px;top:551px">1.00</div>
<div class="a" style="left:466px;top:547px;width:1px;height:20px;background:#dcdcdc"></div>
<div class="t rt" style="left:466.0px;width:82.0px;top:551px">audusd.fl</div>
<div class="a" style="left:551px;top:547px;width:1px;height:20px;background:#dcdcdc"></div>
<div class="t rt" style="left:551.0px;width:84.0px;top:551px">0.69236</div>
<div class="a" style="left:638px;top:547px;width:1px;height:20px;background:#dcdcdc"></div>
<div class="t rt" style="left:638.0px;width:83.0px;top:551px">0.00000</div>
<div class="a" style="left:724px;top:547px;width:1px;height:20px;background:#dcdcdc"></div>
<div class="t rt" style="left:724.0px;width:82.6px;top:551px">0.00000</div>
<div class="a" style="left:810px;top:547px;width:1px;height:20px;background:#dcdcdc"></div>
<div class="t rt" style="left:809.6px;width:185.4px;top:551px">2022.06.17 14:23:49</div>
<div class="a" style="left:998px;top:547px;width:1px;height:20px;background:#dcdcdc"></div>
<div class="t rt" style="left:998.0px;width:83.0px;top:551px">0.69272</div>
<div class="a" style="left:1084px;top:547px;width:1px;height:20px;background:#dcdcdc"></div>
<div class="t rt" style="left:1084.0px;width:83.0px;top:551px">0.00</div>
<div class="a" style="left:1170px;top:547px;width:1px;height:20px;background:#dcdcdc"></div>
<div class="t rt" style="left:1170.0px;width:96.6px;top:551px">36.00</div>
<div class="a" style="left:1269px;top:547px;width:1px;height:20px;background:#dcdcdc"></div>
<div class="a" style="left:12px;top:567px;width:1258px;height:20px;background:#ebebeb"></div>
<div class="t" style="left:34px;top:571px">34056690</div>
<div class="a" style="left:123px;top:567px;width:1px;height:20px;background:#dcdcdc"></div>
<div class="t rt" style="left:123.0px;width:185.5px;top:571px">2022.06.17 15:47:50</div>
<div class="a" style="left:312px;top:567px;width:1px;height:20px;background:#dcdcdc"></div>
<div class="t rt" style="left:311.5px;width:83.5px;top:571px">buy limit</div>
<div class="a" style="left:398px;top:567px;width:1px;height:20px;background:#dcdcdc"></div>
<div class="t rt" style="left:398.0px;width:65.0px;top:571px">1.00</div>
<div class="a" style="left:466px;top:567px;width:1px;height:20px;background:#dcdcdc"></div>
<div class="t rt" style="left:466.0px;width:82.0px;top:571px">audusd.fl</div>
<div class="a" style="left:551px;top:567px;width:1px;height:20px;background:#dcdcdc"></div>
<div class="t rt" style="left:551.0px;width:84.0px;top:571px">0.69131</div>
<div class="a" style="left:638px;top:567px;width:1px;height:20px;background:#dcdcdc"></div>
<div class="t rt" style="left:638.0px;width:83.0px;top:571px">0.00000</div>
<div class="a" style="left:724px;top:567px;width:1px;height:20px;background:#dcdcdc"></div>
<div class="t rt" style="left:724.0px;width:82.6px;top:571px">0.00000</div>
<div class="a" style="left:810px;top:567px;width:1px;height:20px;background:#dcdcdc"></div>
<div class="t rt" style="left:809.6px;width:185.4px;top:571px">2022.06.17 15:54:51</div>
<div class="a" style="left:998px;top:567px;width:1px;height:20px;background:#dcdcdc"></div>
<div class="t rt" style="left:998.0px;width:83.0px;top:571px">0.69173</div>
<div class="a" style="left:1084px;top:567px;width:1px;height:20px;background:#dcdcdc"></div>
<div class="a" style="left:1170px;top:567px;width:1px;height:20px;background:#dcdcdc"></div>
<div class="a" style="left:1269px;top:567px;width:1px;height:20px;background:#dcdcdc"></div>
<svg class="a" style="left:14px;top:468px" width="18" height="18" viewBox="0 0 18 18"><path d="M2.5 1.5 H9.5 L13.5 5.5 V16.5 H2.5 Z" fill="#fafafa" stroke="#8a9098"/><path d="M9.5 1.5 V5.5 H13.5" fill="none" stroke="#8a9098"/><circle cx="12.5" cy="13.5" r="4" fill="#2e82d0"/><circle cx="11.5" cy="12.5" r="1.5" fill="#8cc0f0"/></svg>
<svg class="a" style="left:14px;top:488px" width="18" height="18" viewBox="0 0 18 18"><path d="M2.5 1.5 H9.5 L13.5 5.5 V16.5 H2.5 Z" fill="#fafafa" stroke="#8a9098"/><path d="M9.5 1.5 V5.5 H13.5" fill="none" stroke="#8a9098"/><circle cx="12.5" cy="13.5" r="4" fill="#2e82d0"/><circle cx="11.5" cy="12.5" r="1.5" fill="#8cc0f0"/></svg>
<svg class="a" style="left:15px;top:510px" width="14" height="14" viewBox="0 0 14 14"><rect x="0.5" y="0.5" width="12" height="12" fill="#f8f8f8" stroke="#9aa"/><path d="M6.5 2.5 L10.5 6.5 L8 6.5 L8 10 L5 10 L5 6.5 L2.5 6.5 Z" fill="#2a9a3a"/></svg>
<svg class="a" style="left:15px;top:530px" width="14" height="14" viewBox="0 0 14 14"><rect x="0.5" y="0.5" width="12" height="12" fill="#f8f8f8" stroke="#9aa"/><path d="M6.5 2.5 L10.5 6.5 L8 6.5 L8 10 L5 10 L5 6.5 L2.5 6.5 Z" fill="#2a9a3a"/></svg>
<svg class="a" style="left:14px;top:548px" width="18" height="18" viewBox="0 0 18 18"><path d="M2.5 1.5 H9.5 L13.5 5.5 V16.5 H2.5 Z" fill="#fafafa" stroke="#8a9098"/><path d="M9.5 1.5 V5.5 H13.5" fill="none" stroke="#8a9098"/><circle cx="12.5" cy="13.5" r="4" fill="#2e82d0"/><circle cx="11.5" cy="12.5" r="1.5" fill="#8cc0f0"/></svg>
<svg class="a" style="left:14px;top:568px" width="18" height="18" viewBox="0 0 18 18"><path d="M2.5 1.5 H9.5 L13.5 5.5 V16.5 H2.5 Z" fill="#fafafa" stroke="#8a9098"/><path d="M9.5 1.5 V5.5 H13.5" fill="none" stroke="#8a9098"/><circle cx="12.5" cy="13.5" r="4" fill="#2e82d0"/><circle cx="11.5" cy="12.5" r="1.5" fill="#8cc0f0"/></svg>
<div class="a" style="left:12px;top:446px;width:1px;height:141px;background:#c8c8c8"></div>
<div class="a" style="left:12px;top:445px;width:1268px;height:1px;background:#c8c8c8"></div>
<div class="a" style="left:12px;top:587px;width:1258px;height:21px;background:linear-gradient(#dcdcdc,#d0d0d0)"></div>
<div class="a" style="left:1270px;top:587px;width:10px;height:21px;background:#b8b8b8"></div>
<svg class="a" style="left:16px;top:592px" width="11" height="11" viewBox="0 0 11 11"><circle cx="5.5" cy="5.5" r="4" fill="#e0e0e0" stroke="#a0a0a0"/><circle cx="5.5" cy="5.5" r="1.5" fill="#b0b0b0"/></svg>
<div class="t" style="left:34px;top:591px;font-weight:bold;color:#222">盈/亏: -36 857.50&nbsp; 信用额: 0.00&nbsp; 存款: 36 104.56&nbsp; 取款: -153.85</div>
<div class="t rt" style="left:1100px;width:165px;top:591px;font-weight:bold;color:#222">-906.79</div>
<svg class="a" style="left:1px;top:447px" width="10" height="10" viewBox="0 0 10 10"><path d="M2 2L8 8M8 2L2 8" stroke="#111" stroke-width="2"/></svg>
<svg class="a" style="left:1270px;top:449px" width="10" height="12" viewBox="0 0 10 12"><path d="M2 8 Q5 2 8 8" fill="none" stroke="#555" stroke-width="1.6"/></svg>
</div>



<!-- watermarks -->
<svg class="a" style="left:0;top:0" width="1280" height="608" viewBox="0 0 1280 608">
 <defs>
  <clipPath id="dark"><rect x="328" y="83" width="913" height="317"/></clipPath>
  <clipPath id="light"><path d="M0 0H1280V608H0Z M328 83V400H1241V83Z" clip-rule="evenodd"/></clipPath>
 </defs>
 <g clip-path="url(#light)"><g transform="translate(152,186) rotate(-8)">
  <rect x="-38" y="-37" width="76" height="74" rx="13" fill="rgb(240,200,110)" fill-opacity="0.14"/>
  <path d="M-24 -4 A24 24 0 0 1 6 -24 L4 -16 A16 16 0 0 0 -16 -3 Z M10 -23 A24 24 0 0 1 23 8 L15 5 A16 16 0 0 0 7 -15 Z M21 13 A24 24 0 0 1 -12 21 L-8 14 A16 16 0 0 0 13 9 Z M-20 13 A24 24 0 0 1 -24 2 L-16 2 A16 16 0 0 0 -13 10 Z" fill="rgb(70,70,85)" fill-opacity="0.14"/>
  <path d="M-17 -2 Q-6 -12 8 -8 L12 -2 Q2 -4 -2 2 Q4 10 -6 16 Q-10 6 -17 -2 Z" fill="rgb(70,70,85)" fill-opacity="0.14"/>
 </g>
 <text x="214" y="194" transform="rotate(-8.5 214 194)" font-family="Liberation Sans" font-weight="bold" font-size="70" textLength="230" lengthAdjust="spacingAndGlyphs" fill="rgb(110,95,85)" fill-opacity="0.19">WikiFX</text><g transform="translate(152,536) rotate(-8)">
  <rect x="-38" y="-37" width="76" height="74" rx="13" fill="rgb(240,200,110)" fill-opacity="0.14"/>
  <path d="M-24 -4 A24 24 0 0 1 6 -24 L4 -16 A16 16 0 0 0 -16 -3 Z M10 -23 A24 24 0 0 1 23 8 L15 5 A16 16 0 0 0 7 -15 Z M21 13 A24 24 0 0 1 -12 21 L-8 14 A16 16 0 0 0 13 9 Z M-20 13 A24 24 0 0 1 -24 2 L-16 2 A16 16 0 0 0 -13 10 Z" fill="rgb(70,70,85)" fill-opacity="0.14"/>
  <path d="M-17 -2 Q-6 -12 8 -8 L12 -2 Q2 -4 -2 2 Q4 10 -6 16 Q-10 6 -17 -2 Z" fill="rgb(70,70,85)" fill-opacity="0.14"/>
 </g>
 <text x="214" y="544" transform="rotate(-8.5 214 544)" font-family="Liberation Sans" font-weight="bold" font-size="70" textLength="230" lengthAdjust="spacingAndGlyphs" fill="rgb(110,95,85)" fill-opacity="0.19">WikiFX</text><g transform="translate(756,540) rotate(-8)">
  <rect x="-38" y="-37" width="76" height="74" rx="13" fill="rgb(240,200,110)" fill-opacity="0.14"/>
  <path d="M-24 -4 A24 24 0 0 1 6 -24 L4 -16 A16 16 0 0 0 -16 -3 Z M10 -23 A24 24 0 0 1 23 8 L15 5 A16 16 0 0 0 7 -15 Z M21 13 A24 24 0 0 1 -12 21 L-8 14 A16 16 0 0 0 13 9 Z M-20 13 A24 24 0 0 1 -24 2 L-16 2 A16 16 0 0 0 -13 10 Z" fill="rgb(70,70,85)" fill-opacity="0.14"/>
  <path d="M-17 -2 Q-6 -12 8 -8 L12 -2 Q2 -4 -2 2 Q4 10 -6 16 Q-10 6 -17 -2 Z" fill="rgb(70,70,85)" fill-opacity="0.14"/>
 </g>
 <text x="818" y="548" transform="rotate(-8.5 818 548)" font-family="Liberation Sans" font-weight="bold" font-size="70" textLength="230" lengthAdjust="spacingAndGlyphs" fill="rgb(110,95,85)" fill-opacity="0.19">WikiFX</text></g>
 <g clip-path="url(#dark)"><g transform="translate(152,186) rotate(-8)">
  <rect x="-38" y="-37" width="76" height="74" rx="13" fill="rgb(150,128,70)" fill-opacity="0.17"/>
  <path d="M-24 -4 A24 24 0 0 1 6 -24 L4 -16 A16 16 0 0 0 -16 -3 Z M10 -23 A24 24 0 0 1 23 8 L15 5 A16 16 0 0 0 7 -15 Z M21 13 A24 24 0 0 1 -12 21 L-8 14 A16 16 0 0 0 13 9 Z M-20 13 A24 24 0 0 1 -24 2 L-16 2 A16 16 0 0 0 -13 10 Z" fill="#000" fill-opacity="0.6"/>
  <path d="M-17 -2 Q-6 -12 8 -8 L12 -2 Q2 -4 -2 2 Q4 10 -6 16 Q-10 6 -17 -2 Z" fill="#000" fill-opacity="0.6"/>
 </g>
 <text x="214" y="194" transform="rotate(-8.5 214 194)" font-family="Liberation Sans" font-weight="bold" font-size="70" textLength="230" lengthAdjust="spacingAndGlyphs" fill="rgb(150,105,65)" fill-opacity="0.18">WikiFX</text><g transform="translate(761,184) rotate(-8)">
  <rect x="-38" y="-37" width="76" height="74" rx="13" fill="rgb(150,128,70)" fill-opacity="0.17"/>
  <path d="M-24 -4 A24 24 0 0 1 6 -24 L4 -16 A16 16 0 0 0 -16 -3 Z M10 -23 A24 24 0 0 1 23 8 L15 5 A16 16 0 0 0 7 -15 Z M21 13 A24 24 0 0 1 -12 21 L-8 14 A16 16 0 0 0 13 9 Z M-20 13 A24 24 0 0 1 -24 2 L-16 2 A16 16 0 0 0 -13 10 Z" fill="#000" fill-opacity="0.6"/>
  <path d="M-17 -2 Q-6 -12 8 -8 L12 -2 Q2 -4 -2 2 Q4 10 -6 16 Q-10 6 -17 -2 Z" fill="#000" fill-opacity="0.6"/>
 </g>
 <text x="823" y="192" transform="rotate(-8.5 823 192)" font-family="Liberation Sans" font-weight="bold" font-size="70" textLength="230" lengthAdjust="spacingAndGlyphs" fill="rgb(150,105,65)" fill-opacity="0.18">WikiFX</text></g>
</svg>
<!-- annotations -->
<svg class="a" style="left:0;top:0" width="1280" height="608" viewBox="0 0 1280 608">
 <rect x="6.5" y="545.5" width="1290" height="18" fill="none" stroke="#e07070" stroke-width="1.1"/>
 <path d="M593.4 258.7 L748.5 536.8 L746.4 538.0 L755.5 545.5 L753.8 533.9 L751.7 535.0 L594.2 258.3 Z" fill="#e03434"/>
 <path d="M1150.2 272.6 L838.2 538.5 L836.6 536.7 L831.0 547.0 L842.1 543.0 L840.5 541.2 L1150.8 273.4 Z" fill="#e03434"/>
</svg>

</div></body></html>
